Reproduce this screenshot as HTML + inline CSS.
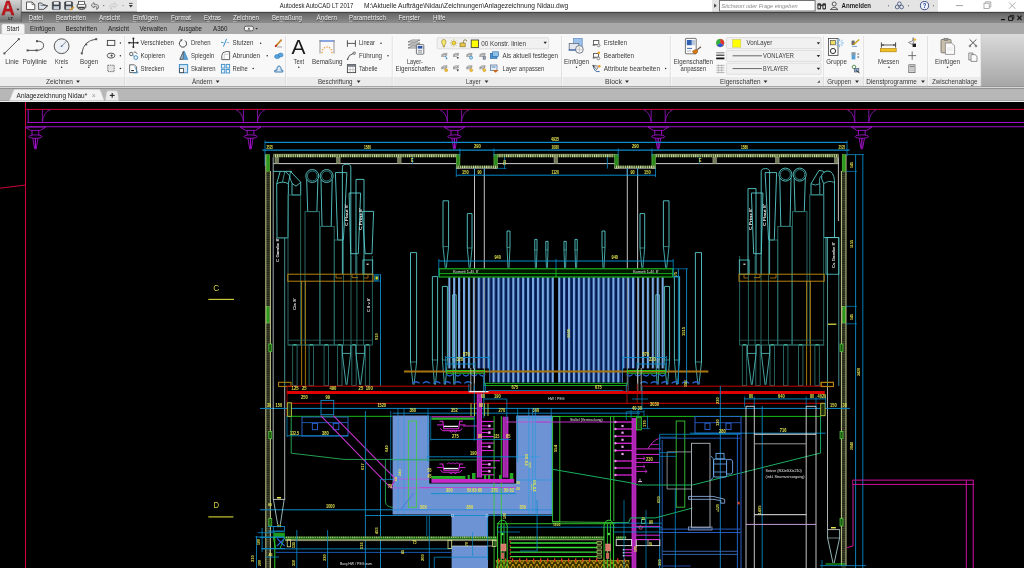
<!DOCTYPE html>
<html><head><meta charset="utf-8"><title>Autodesk AutoCAD LT 2017</title>
<style>
html,body{margin:0;padding:0;background:#000;overflow:hidden}
body{width:1024px;height:568px}
svg{display:block;position:absolute;left:0;top:0;will-change:transform;transform:translateZ(0)}
text{font-family:"Liberation Sans",sans-serif;white-space:pre}
</style></head><body>
<svg width="1024" height="568" viewBox="0 0 1024 568">
<defs>
<linearGradient id="gMenu" x1="0" y1="0" x2="0" y2="1"><stop offset="0" stop-color="#4e4e4e"/><stop offset="0.15" stop-color="#6a6a6a"/><stop offset="1" stop-color="#8e8e8e"/></linearGradient>
<linearGradient id="gApp" x1="0" y1="0" x2="0" y2="1"><stop offset="0" stop-color="#d2d2d2"/><stop offset="0.55" stop-color="#a8a8a8"/><stop offset="1" stop-color="#6c6c6c"/></linearGradient>
<linearGradient id="gEmpty" x1="0" y1="0" x2="0" y2="1"><stop offset="0" stop-color="#dadada"/><stop offset="1" stop-color="#a6a6a6"/></linearGradient>
</defs>
<rect x="0" y="0" width="1024" height="568" fill="#000" stroke="none" stroke-width="1" />
<rect x="0" y="0" width="1024" height="12.5" fill="#ffffff" stroke="none" stroke-width="1" />
<rect x="22" y="0" width="115" height="12" fill="#e6e6e6" stroke="none" stroke-width="1" />
<rect x="712" y="0" width="226" height="12" fill="#e4e4e4" stroke="none" stroke-width="1" />
<rect x="0" y="12" width="1024" height="11.5" fill="url(#gMenu)" stroke="none" stroke-width="1" />
<line x1="0" y1="12.3" x2="1024" y2="12.3" stroke="#3a3a3a" stroke-width="0.8" />
<rect x="0" y="23" width="1024" height="11" fill="#a9a9a9" stroke="none" stroke-width="1" />
<rect x="0" y="34" width="981" height="43" fill="#f8f8f8" stroke="none" stroke-width="1" />
<rect x="0" y="77" width="981" height="9.5" fill="#ebebeb" stroke="none" stroke-width="1" />
<rect x="981" y="34" width="43" height="52.5" fill="url(#gEmpty)" stroke="none" stroke-width="1" />
<rect x="0" y="86.5" width="1024" height="2" fill="#d6d6d6" stroke="none" stroke-width="1" />
<rect x="0" y="88.5" width="1024" height="12" fill="#b7b7b7" stroke="none" stroke-width="1" />
<rect x="0" y="100.5" width="1024" height="1.9" fill="#ececec" stroke="none" stroke-width="1" />
<rect x="0" y="0" width="21" height="21.5" fill="url(#gApp)" stroke="none" stroke-width="1" />
<line x1="21.3" y1="0" x2="21.3" y2="22" stroke="#555" stroke-width="0.8" />
<text x="1.2" y="14.6" font-size="19.5" font-weight="bold" fill="#c2141b" textLength="13.4" lengthAdjust="spacingAndGlyphs" stroke="#8e0f14" stroke-width="0.3">A</text>
<path d="M16.4 8.8 L19.4 8.8 L17.9 10.6 Z" fill="#222" stroke="none" stroke-width="0" />
<text x="8.2" y="19.8" font-size="4.2" fill="#1a1a1a" textLength="4.8" lengthAdjust="spacingAndGlyphs" font-weight="bold">LT</text>
<path d="M26.5 2 L32 2 L34.8 4.6 L34.8 9.6 L26.5 9.6 Z" fill="#fdfdfd" stroke="#4a4a4a" stroke-width="0.9" />
<path d="M32 2 L32 4.6 L34.8 4.6" fill="none" stroke="#4a4a4a" stroke-width="0.7" />
<path d="M38.6 3 L41.5 3 L42.5 4.2 L47.6 5.8 L43.6 9.4 L38.6 9.4 Z" fill="#dfe6ee" stroke="#4a4a4a" stroke-width="0.9" />
<path d="M40.5 5.2 L47.6 5.8 L43.6 9.4" fill="none" stroke="#4a4a4a" stroke-width="0.7" />
<rect x="52.3" y="1.8" width="8" height="7.8" fill="#3d4450" stroke="#30343c" stroke-width="0.6" rx="0.8"/>
<rect x="53.8" y="2" width="5" height="2.6" fill="#e8e8e8" stroke="none" stroke-width="1" />
<rect x="53.6" y="6.2" width="5.4" height="3.2" fill="#cfd3da" stroke="none" stroke-width="1" />
<rect x="64.6" y="1.8" width="8" height="7.8" fill="#3d4450" stroke="#30343c" stroke-width="0.6" rx="0.8"/>
<rect x="66.1" y="2" width="5" height="2.6" fill="#e8e8e8" stroke="none" stroke-width="1" />
<rect x="65.9" y="6.2" width="5.4" height="3.2" fill="#cfd3da" stroke="none" stroke-width="1" />
<path d="M69.5 9.6 L73.5 6.6 L74.3 7.6 L70.6 10.4 Z" fill="#e09a20" stroke="none" stroke-width="0" />
<ellipse cx="81.5" cy="6" rx="4.4" ry="3.4" fill="#f4f4f4" stroke="#3a3a3a" stroke-width="1"/>
<rect x="78.6" y="1.6" width="5.8" height="3" fill="#fff" stroke="#3a3a3a" stroke-width="0.7" />
<rect x="78.2" y="6.8" width="6.6" height="1.6" fill="#3a3a3a" stroke="none" stroke-width="1" />
<path d="M91 5.4 L94 2.6 L94 4.2 Q98.8 4 98.6 7.2 Q98.4 9.2 96.2 9.4 Q97.6 8 96.6 6.8 Q95.8 6.2 94 6.4 L94 8 Z" fill="#d8d8d8" stroke="#555" stroke-width="0.7" />
<circle cx="103.8" cy="5.6" r="0.55" fill="#444" stroke="none" stroke-width="0"/>
<path d="M117.4 5.4 L114.4 2.6 L114.4 4.2 Q109.6 4 109.8 7.2 Q110 9.2 112.2 9.4 Q110.8 8 111.8 6.8 Q112.6 6.2 114.4 6.4 L114.4 8 Z" fill="#e2e2e2" stroke="#c4c4c4" stroke-width="0.7" />
<circle cx="123" cy="5.6" r="0.55" fill="#8a8a8a" stroke="none" stroke-width="0"/>
<line x1="129" y1="3.4" x2="132.6" y2="3.4" stroke="#444" stroke-width="0.9" />
<path d="M128.8 5 L132.8 5 L130.8 7.6 Z" fill="#333" stroke="none" stroke-width="0" />
<line x1="21.5" y1="12.2" x2="137" y2="12.2" stroke="#4a4a4a" stroke-width="0.9" />
<text x="279.7" y="8.2" font-size="6.6" fill="#222" textLength="73.6" lengthAdjust="spacingAndGlyphs" >Autodesk AutoCAD LT 2017</text>
<text x="363.9" y="8.2" font-size="6.6" fill="#222" textLength="204.3" lengthAdjust="spacingAndGlyphs" >M:\Aktuelle Aufträge\Nidau\Zeichnungen\Anlagezeichnung Nidau.dwg</text>
<path d="M714.2 3.6 L714.2 7.8 L716.6 5.7 Z" fill="#333" stroke="none" stroke-width="0" />
<rect x="719.5" y="0.6" width="95.6" height="10.4" fill="#fff" stroke="#555" stroke-width="0.8" />
<text x="721.6" y="7.9" font-size="6" fill="#8a8a8a" textLength="76" lengthAdjust="spacingAndGlyphs" font-style="italic">Stichwort oder Frage eingeben</text>
<rect x="817.4" y="3.2" width="3.6" height="6.2" fill="#333" stroke="none" stroke-width="0" rx="1"/>
<rect x="822.4" y="3.2" width="3.6" height="6.2" fill="#333" stroke="none" stroke-width="0" rx="1"/>
<rect x="820" y="4.6" width="3" height="1.6" fill="#333" stroke="none" stroke-width="1" />
<rect x="818.4" y="5.6" width="1.6" height="2.6" fill="#ddd" stroke="none" stroke-width="1" />
<rect x="823.4" y="5.6" width="1.6" height="2.6" fill="#ddd" stroke="none" stroke-width="1" />
<circle cx="834.2" cy="4" r="2" fill="#eee" stroke="#333" stroke-width="0.8"/>
<path d="M830.4 9.6 Q834.2 5.2 838 9.6 Z" fill="#eee" stroke="#333" stroke-width="0.8" />
<text x="841.6" y="8.3" font-size="6.6" fill="#1c1c1c" textLength="29.4" lengthAdjust="spacingAndGlyphs" font-weight="bold">Anmelden</text>
<circle cx="888.5" cy="5.8" r="0.55" fill="#444" stroke="none" stroke-width="0"/>
<circle cx="899.4" cy="3.8" r="1.9" fill="none" stroke="#3c4f7a" stroke-width="0.8"/>
<circle cx="897.2" cy="7" r="1.9" fill="none" stroke="#3c4f7a" stroke-width="0.8"/>
<circle cx="901.6" cy="7" r="1.9" fill="none" stroke="#3c4f7a" stroke-width="0.8"/>
<circle cx="908.5" cy="5.8" r="0.55" fill="#444" stroke="none" stroke-width="0"/>
<circle cx="924.5" cy="5.6" r="4.1" fill="#eef2fb" stroke="#2b3f78" stroke-width="0.9"/>
<text x="922.7" y="8" font-size="6.6" fill="#1f3f9a" textLength="3.6" lengthAdjust="spacingAndGlyphs" font-weight="bold">?</text>
<circle cx="933.5" cy="5.8" r="0.55" fill="#444" stroke="none" stroke-width="0"/>
<line x1="956" y1="5.6" x2="963" y2="5.6" stroke="#8a8a8a" stroke-width="0.8" />
<rect x="984" y="3.2" width="5.2" height="5.2" fill="none" stroke="#9a9a9a" stroke-width="0.8" />
<path d="M985.6 3.2 L985.6 1.8 L990.8 1.8 L990.8 7 L989.2 7" fill="none" stroke="#9a9a9a" stroke-width="0.8" />
<line x1="1009" y1="2.4" x2="1015.4" y2="8.8" stroke="#9a9a9a" stroke-width="0.8" />
<line x1="1015.4" y1="2.4" x2="1009" y2="8.8" stroke="#9a9a9a" stroke-width="0.8" />
<line x1="1001" y1="19.6" x2="1005" y2="19.6" stroke="#111" stroke-width="1.2" />
<rect x="1008.6" y="16.8" width="3.8" height="3.6" fill="none" stroke="#111" stroke-width="0.9" />
<path d="M1010 16.8 L1010 15.4 L1013.8 15.4 L1013.8 19 L1012.4 19" fill="none" stroke="#111" stroke-width="0.8" />
<line x1="1017.4" y1="15.6" x2="1021.6" y2="20.2" stroke="#111" stroke-width="1.1" />
<line x1="1021.6" y1="15.6" x2="1017.4" y2="20.2" stroke="#111" stroke-width="1.1" />
<text x="29.1" y="20.6" font-size="6.6" fill="#2a2a2a" textLength="14.2" lengthAdjust="spacingAndGlyphs" opacity="0.7">Datei</text>
<text x="28.8" y="20.2" font-size="6.6" fill="#f2f2f2" textLength="14.2" lengthAdjust="spacingAndGlyphs" >Datei</text>
<line x1="28.8" y1="21.3" x2="31.64" y2="21.3" stroke="#e8e8e8" stroke-width="0.5" />
<text x="56.3" y="20.6" font-size="6.6" fill="#2a2a2a" textLength="30" lengthAdjust="spacingAndGlyphs" opacity="0.7">Bearbeiten</text>
<text x="56" y="20.2" font-size="6.6" fill="#f2f2f2" textLength="30" lengthAdjust="spacingAndGlyphs" >Bearbeiten</text>
<line x1="56.0" y1="21.3" x2="59.0" y2="21.3" stroke="#e8e8e8" stroke-width="0.5" />
<text x="99.3" y="20.6" font-size="6.6" fill="#2a2a2a" textLength="21" lengthAdjust="spacingAndGlyphs" opacity="0.7">Ansicht</text>
<text x="99" y="20.2" font-size="6.6" fill="#f2f2f2" textLength="21" lengthAdjust="spacingAndGlyphs" >Ansicht</text>
<line x1="99.0" y1="21.3" x2="102.0" y2="21.3" stroke="#e8e8e8" stroke-width="0.5" />
<text x="133.3" y="20.6" font-size="6.6" fill="#2a2a2a" textLength="25" lengthAdjust="spacingAndGlyphs" opacity="0.7">Einfügen</text>
<text x="133" y="20.2" font-size="6.6" fill="#f2f2f2" textLength="25" lengthAdjust="spacingAndGlyphs" >Einfügen</text>
<line x1="133.0" y1="21.3" x2="136.125" y2="21.3" stroke="#e8e8e8" stroke-width="0.5" />
<text x="171.3" y="20.6" font-size="6.6" fill="#2a2a2a" textLength="20" lengthAdjust="spacingAndGlyphs" opacity="0.7">Format</text>
<text x="171" y="20.2" font-size="6.6" fill="#f2f2f2" textLength="20" lengthAdjust="spacingAndGlyphs" >Format</text>
<line x1="171.0" y1="21.3" x2="174.33333333333334" y2="21.3" stroke="#e8e8e8" stroke-width="0.5" />
<text x="204.3" y="20.6" font-size="6.6" fill="#2a2a2a" textLength="17" lengthAdjust="spacingAndGlyphs" opacity="0.7">Extras</text>
<text x="204" y="20.2" font-size="6.6" fill="#f2f2f2" textLength="17" lengthAdjust="spacingAndGlyphs" >Extras</text>
<line x1="206.83333333333334" y1="21.3" x2="209.66666666666666" y2="21.3" stroke="#e8e8e8" stroke-width="0.5" />
<text x="233.3" y="20.6" font-size="6.6" fill="#2a2a2a" textLength="26" lengthAdjust="spacingAndGlyphs" opacity="0.7">Zeichnen</text>
<text x="233" y="20.2" font-size="6.6" fill="#f2f2f2" textLength="26" lengthAdjust="spacingAndGlyphs" >Zeichnen</text>
<line x1="233.0" y1="21.3" x2="236.25" y2="21.3" stroke="#e8e8e8" stroke-width="0.5" />
<text x="272.3" y="20.6" font-size="6.6" fill="#2a2a2a" textLength="30" lengthAdjust="spacingAndGlyphs" opacity="0.7">Bemaßung</text>
<text x="272" y="20.2" font-size="6.6" fill="#f2f2f2" textLength="30" lengthAdjust="spacingAndGlyphs" >Bemaßung</text>
<line x1="279.5" y1="21.3" x2="283.25" y2="21.3" stroke="#e8e8e8" stroke-width="0.5" />
<text x="316.8" y="20.6" font-size="6.6" fill="#2a2a2a" textLength="20.5" lengthAdjust="spacingAndGlyphs" opacity="0.7">Ändern</text>
<text x="316.5" y="20.2" font-size="6.6" fill="#f2f2f2" textLength="20.5" lengthAdjust="spacingAndGlyphs" >Ändern</text>
<line x1="319.9166666666667" y1="21.3" x2="323.3333333333333" y2="21.3" stroke="#e8e8e8" stroke-width="0.5" />
<text x="349.3" y="20.6" font-size="6.6" fill="#2a2a2a" textLength="37" lengthAdjust="spacingAndGlyphs" opacity="0.7">Parametrisch</text>
<text x="349" y="20.2" font-size="6.6" fill="#f2f2f2" textLength="37" lengthAdjust="spacingAndGlyphs" >Parametrisch</text>
<line x1="349.0" y1="21.3" x2="352.0833333333333" y2="21.3" stroke="#e8e8e8" stroke-width="0.5" />
<text x="398.8" y="20.6" font-size="6.6" fill="#2a2a2a" textLength="21.5" lengthAdjust="spacingAndGlyphs" opacity="0.7">Fenster</text>
<text x="398.5" y="20.2" font-size="6.6" fill="#f2f2f2" textLength="21.5" lengthAdjust="spacingAndGlyphs" >Fenster</text>
<line x1="407.7142857142857" y1="21.3" x2="410.7857142857143" y2="21.3" stroke="#e8e8e8" stroke-width="0.5" />
<text x="433.3" y="20.6" font-size="6.6" fill="#2a2a2a" textLength="12.5" lengthAdjust="spacingAndGlyphs" opacity="0.7">Hilfe</text>
<text x="433" y="20.2" font-size="6.6" fill="#f2f2f2" textLength="12.5" lengthAdjust="spacingAndGlyphs" >Hilfe</text>
<line x1="433.0" y1="21.3" x2="435.5" y2="21.3" stroke="#e8e8e8" stroke-width="0.5" />
<path d="M1.8 34.2 L1.8 25 L2.8 24 L23.4 24 L24.4 25 L24.4 34.2 Z" fill="#f4f4f4" stroke="#d0d0d0" stroke-width="0.5" />
<text x="6.6" y="31.3" font-size="6.6" fill="#222" textLength="12.6" lengthAdjust="spacingAndGlyphs" >Start</text>
<text x="30" y="31.3" font-size="6.6" fill="#222" textLength="25" lengthAdjust="spacingAndGlyphs" >Einfügen</text>
<text x="65.5" y="31.3" font-size="6.6" fill="#222" textLength="31.5" lengthAdjust="spacingAndGlyphs" >Beschriften</text>
<text x="108" y="31.3" font-size="6.6" fill="#222" textLength="21" lengthAdjust="spacingAndGlyphs" >Ansicht</text>
<text x="139.5" y="31.3" font-size="6.6" fill="#222" textLength="27.5" lengthAdjust="spacingAndGlyphs" >Verwalten</text>
<text x="178" y="31.3" font-size="6.6" fill="#222" textLength="24" lengthAdjust="spacingAndGlyphs" >Ausgabe</text>
<text x="213" y="31.3" font-size="6.6" fill="#222" textLength="14.5" lengthAdjust="spacingAndGlyphs" >A360</text>
<rect x="244.4" y="26.2" width="9" height="4.6" fill="#f0f0f0" stroke="#333" stroke-width="0.7" rx="1.6"/>
<path d="M247.6 29.6 L250.2 29.6 L248.9 27.6 Z" fill="#333" stroke="none" stroke-width="0" />
<path d="M255.4 28 L257.8 28 L256.6 29.6 Z" fill="#222" stroke="none" stroke-width="0" />
<path d="M9.6 100.6 L13.6 90.6 L15 89.6 L99 89.6 L100.4 90.6 L104 100.6 Z" fill="#f4f4f4" stroke="#d8d8d8" stroke-width="0.5" />
<text x="16.6" y="97.9" font-size="6.6" fill="#222" textLength="70.6" lengthAdjust="spacingAndGlyphs" >Anlagezeichnung Nidau*</text>
<text x="91.8" y="97.6" font-size="6.4" fill="#999" textLength="4" lengthAdjust="spacingAndGlyphs" >×</text>
<path d="M105.4 100.4 L106.6 92 L108 90.8 L116.4 90.8 L117.6 92 L118.8 100.4 Z" fill="#ececec" stroke="#ccc" stroke-width="0.5" />
<line x1="109.8" y1="95.4" x2="114.6" y2="95.4" stroke="#222" stroke-width="1.1" />
<line x1="112.2" y1="93" x2="112.2" y2="97.8" stroke="#222" stroke-width="1.1" />
<line x1="124.8" y1="36" x2="124.8" y2="86" stroke="#d4d4d4" stroke-width="0.8" />
<line x1="125.6" y1="36" x2="125.6" y2="86" stroke="#ffffff" stroke-width="0.6" />
<line x1="285.6" y1="36" x2="285.6" y2="86" stroke="#d4d4d4" stroke-width="0.8" />
<line x1="286.40000000000003" y1="36" x2="286.40000000000003" y2="86" stroke="#ffffff" stroke-width="0.6" />
<line x1="392.3" y1="36" x2="392.3" y2="86" stroke="#d4d4d4" stroke-width="0.8" />
<line x1="393.1" y1="36" x2="393.1" y2="86" stroke="#ffffff" stroke-width="0.6" />
<line x1="561.6" y1="36" x2="561.6" y2="86" stroke="#d4d4d4" stroke-width="0.8" />
<line x1="562.4" y1="36" x2="562.4" y2="86" stroke="#ffffff" stroke-width="0.6" />
<line x1="670.4" y1="36" x2="670.4" y2="86" stroke="#d4d4d4" stroke-width="0.8" />
<line x1="671.1999999999999" y1="36" x2="671.1999999999999" y2="86" stroke="#ffffff" stroke-width="0.6" />
<line x1="823.8" y1="36" x2="823.8" y2="86" stroke="#d4d4d4" stroke-width="0.8" />
<line x1="824.5999999999999" y1="36" x2="824.5999999999999" y2="86" stroke="#ffffff" stroke-width="0.6" />
<line x1="863.8" y1="36" x2="863.8" y2="86" stroke="#d4d4d4" stroke-width="0.8" />
<line x1="864.5999999999999" y1="36" x2="864.5999999999999" y2="86" stroke="#ffffff" stroke-width="0.6" />
<line x1="927.6" y1="36" x2="927.6" y2="86" stroke="#d4d4d4" stroke-width="0.8" />
<line x1="928.4" y1="36" x2="928.4" y2="86" stroke="#ffffff" stroke-width="0.6" />
<line x1="981" y1="34" x2="981" y2="86.5" stroke="#c8c8c8" stroke-width="0.6" />
<text x="46" y="83.8" font-size="6.6" fill="#3a3a3a" textLength="27" lengthAdjust="spacingAndGlyphs" >Zeichnen</text>
<path d="M76.125 80.475 L79.875 80.475 L78 82.975 Z" fill="#2a2a2a" stroke="none" stroke-width="0" />
<text x="192" y="83.8" font-size="6.6" fill="#3a3a3a" textLength="20.5" lengthAdjust="spacingAndGlyphs" >Ändern</text>
<path d="M215.725 80.475 L219.475 80.475 L217.6 82.975 Z" fill="#2a2a2a" stroke="none" stroke-width="0" />
<text x="317.9" y="83.8" font-size="6.6" fill="#3a3a3a" textLength="34.7" lengthAdjust="spacingAndGlyphs" >Beschriftung</text>
<path d="M356.725 80.475 L360.475 80.475 L358.6 82.975 Z" fill="#2a2a2a" stroke="none" stroke-width="0" />
<text x="466" y="83.8" font-size="6.6" fill="#3a3a3a" textLength="14.6" lengthAdjust="spacingAndGlyphs" >Layer</text>
<path d="M484.625 80.475 L488.375 80.475 L486.5 82.975 Z" fill="#2a2a2a" stroke="none" stroke-width="0" />
<text x="605" y="83.8" font-size="6.6" fill="#3a3a3a" textLength="17" lengthAdjust="spacingAndGlyphs" >Block</text>
<path d="M625.125 80.475 L628.875 80.475 L627 82.975 Z" fill="#2a2a2a" stroke="none" stroke-width="0" />
<text x="720" y="83.8" font-size="6.6" fill="#3a3a3a" textLength="40.5" lengthAdjust="spacingAndGlyphs" >Eigenschaften</text>
<path d="M763.625 80.475 L767.375 80.475 L765.5 82.975 Z" fill="#2a2a2a" stroke="none" stroke-width="0" />
<text x="827.3" y="83.8" font-size="6.6" fill="#3a3a3a" textLength="24.0" lengthAdjust="spacingAndGlyphs" >Gruppen</text>
<path d="M855.125 80.475 L858.875 80.475 L857 82.975 Z" fill="#2a2a2a" stroke="none" stroke-width="0" />
<text x="866.3" y="83.8" font-size="6.6" fill="#3a3a3a" textLength="50.6" lengthAdjust="spacingAndGlyphs" >Dienstprogramme</text>
<path d="M921.125 80.475 L924.875 80.475 L923 82.975 Z" fill="#2a2a2a" stroke="none" stroke-width="0" />
<text x="931.9" y="83.8" font-size="6.6" fill="#3a3a3a" textLength="45.6" lengthAdjust="spacingAndGlyphs" >Zwischenablage</text>
<path d="M817.2 82.8 L819.8 82.8 L819.8 80.2 Z" fill="#444" stroke="none" stroke-width="0" />
<line x1="4.4" y1="53.4" x2="18.8" y2="39.2" stroke="#555" stroke-width="1" />
<rect x="3.4" y="52.4" width="2" height="2" fill="#555" stroke="none" stroke-width="1" />
<rect x="17.8" y="38.2" width="2" height="2" fill="#555" stroke="none" stroke-width="1" />
<text x="5.2" y="63.6" font-size="6.6" fill="#3a3a3a" textLength="13.6" lengthAdjust="spacingAndGlyphs" >Linie</text>
<path d="M27.6 50.4 L36.6 50.4 Q43.6 50.2 43.6 45.4 Q43.4 41 37 41.2" fill="none" stroke="#555" stroke-width="1" />
<rect x="26.6" y="49.4" width="2" height="2" fill="#555" stroke="none" stroke-width="1" />
<rect x="35.6" y="49.4" width="2" height="2" fill="#555" stroke="none" stroke-width="1" />
<rect x="36" y="40.2" width="2" height="2" fill="#555" stroke="none" stroke-width="1" />
<text x="22.4" y="63.6" font-size="6.6" fill="#3a3a3a" textLength="24.6" lengthAdjust="spacingAndGlyphs" >Polylinie</text>
<circle cx="61.6" cy="46.2" r="7.4" fill="#eef1f6" stroke="#555" stroke-width="1"/>
<line x1="61.6" y1="46.2" x2="66.4" y2="41.4" stroke="#6a7d99" stroke-width="0.9" />
<circle cx="61.6" cy="46.2" r="0.9" fill="#5b7aa6" stroke="none" stroke-width="0"/>
<text x="55" y="63.6" font-size="6.6" fill="#3a3a3a" textLength="13" lengthAdjust="spacingAndGlyphs" >Kreis</text>
<circle cx="61.6" cy="67.3" r="0.75" fill="#2a2a2a" stroke="none" stroke-width="0"/>
<path d="M81.8 53.4 Q83.6 40.4 96.2 39.2" fill="none" stroke="#555" stroke-width="1" />
<rect x="80.8" y="52.4" width="2" height="2" fill="#555" stroke="none" stroke-width="1" />
<rect x="95.2" y="38.2" width="2" height="2" fill="#555" stroke="none" stroke-width="1" />
<rect x="85.4" y="43.6" width="1.8" height="1.8" fill="#555" stroke="none" stroke-width="1" />
<text x="80" y="63.6" font-size="6.6" fill="#3a3a3a" textLength="18.2" lengthAdjust="spacingAndGlyphs" >Bogen</text>
<circle cx="88.8" cy="67.3" r="0.75" fill="#2a2a2a" stroke="none" stroke-width="0"/>
<rect x="107.4" y="40.4" width="7.4" height="5" fill="none" stroke="#444" stroke-width="0.9" />
<rect x="106.8" y="44.6" width="1.4" height="1.4" fill="#444" stroke="none" stroke-width="1" />
<circle cx="120.4" cy="43" r="0.75" fill="#2a2a2a" stroke="none" stroke-width="0"/>
<ellipse cx="111" cy="55.6" rx="3.8" ry="2.5" fill="none" stroke="#444" stroke-width="0.9"/>
<circle cx="111.6" cy="55.6" r="1.1" fill="#444" stroke="none" stroke-width="0"/>
<circle cx="120.4" cy="55.8" r="0.75" fill="#2a2a2a" stroke="none" stroke-width="0"/>
<rect x="107.8" y="65.2" width="6.4" height="6.4" fill="#e4e4e4" stroke="#555" stroke-width="0.8" stroke-dasharray="1.4 0.8"/>
<circle cx="120.4" cy="68.6" r="0.75" fill="#2a2a2a" stroke="none" stroke-width="0"/>
<line x1="129.4" y1="42.8" x2="137.4" y2="42.8" stroke="#222" stroke-width="1" />
<line x1="133.4" y1="38.8" x2="133.4" y2="46.8" stroke="#222" stroke-width="1" />
<circle cx="129.2" cy="42.8" r="1" fill="#222" stroke="none" stroke-width="0"/>
<circle cx="137.6" cy="42.8" r="1" fill="#222" stroke="none" stroke-width="0"/>
<circle cx="133.4" cy="38.6" r="1" fill="#222" stroke="none" stroke-width="0"/>
<circle cx="133.4" cy="47" r="1" fill="#222" stroke="none" stroke-width="0"/>
<text x="140.4" y="45.3" font-size="6.6" fill="#3a3a3a" textLength="33.6" lengthAdjust="spacingAndGlyphs" >Verschieben</text>
<circle cx="131.2" cy="54" r="1.7" fill="none" stroke="#444" stroke-width="0.8"/>
<circle cx="135.8" cy="57.6" r="1.9" fill="none" stroke="#3d8fc9" stroke-width="1"/>
<line x1="132.6" y1="55.2" x2="134.6" y2="56.6" stroke="#3d8fc9" stroke-width="0.8" />
<path d="M133.6 52 Q136.6 51.6 137.2 54" fill="none" stroke="#444" stroke-width="0.7" />
<text x="140.5" y="58.1" font-size="6.6" fill="#3a3a3a" textLength="24.5" lengthAdjust="spacingAndGlyphs" >Kopieren</text>
<path d="M129.6 64.8 L134.4 64.8 L136.6 67 L136.6 72.6 L129.6 72.6 Z" fill="#fff" stroke="#444" stroke-width="0.8" />
<path d="M134.6 66.6 L137.8 72.8 L133 72.8" fill="none" stroke="#3d8fc9" stroke-width="0.8" />
<line x1="131.2" y1="70.6" x2="134" y2="70.6" stroke="#222" stroke-width="1" />
<text x="140.5" y="71" font-size="6.6" fill="#3a3a3a" textLength="23.8" lengthAdjust="spacingAndGlyphs" >Strecken</text>
<path d="M185 40.6 A3.6 3.6 0 1 1 181.2 40.4" fill="none" stroke="#444" stroke-width="1" />
<path d="M180.4 39.2 L182.6 39.6 L181.4 41.6 Z" fill="#444" stroke="none" stroke-width="0" />
<text x="190.9" y="45.3" font-size="6.6" fill="#3a3a3a" textLength="19.7" lengthAdjust="spacingAndGlyphs" >Drehen</text>
<path d="M183.4 51.2 L179.8 59.4 L183.4 59.4 Z" fill="#8fb6d8" stroke="#444" stroke-width="0.8" />
<path d="M184.2 51.2 L187.8 59.4 L184.2 59.4 Z" fill="#5f9fd0" stroke="#3d8fc9" stroke-width="0.8" />
<text x="190.9" y="58.1" font-size="6.6" fill="#3a3a3a" textLength="23.4" lengthAdjust="spacingAndGlyphs" >Spiegeln</text>
<rect x="179.4" y="64.6" width="8.2" height="8.2" fill="#d6e7f5" stroke="#3d8fc9" stroke-width="1" />
<rect x="179.6" y="68.6" width="4" height="4" fill="#fff" stroke="#444" stroke-width="0.8" />
<text x="190.9" y="71" font-size="6.6" fill="#3a3a3a" textLength="24.7" lengthAdjust="spacingAndGlyphs" >Skalieren</text>
<line x1="223.4" y1="46.6" x2="226.6" y2="38.8" stroke="#3d8fc9" stroke-width="1" />
<line x1="221" y1="42.2" x2="223.6" y2="42.8" stroke="#3d8fc9" stroke-width="0.9" />
<line x1="226.6" y1="42.6" x2="229.6" y2="42.6" stroke="#3d8fc9" stroke-width="0.8" stroke-dasharray="1 0.6"/>
<text x="232.5" y="45.3" font-size="6.6" fill="#3a3a3a" textLength="21" lengthAdjust="spacingAndGlyphs" >Stutzen</text>
<circle cx="260.6" cy="43.2" r="0.75" fill="#2a2a2a" stroke="none" stroke-width="0"/>
<path d="M221.8 59.6 L221.8 55.6 Q222 51.8 226 51.6 L229.6 51.6 L229.6 59.6 Z" fill="#fff" stroke="#555" stroke-width="0.9" />
<path d="M224.2 59.4 L224.2 54.2 L229.4 54.2" fill="none" stroke="#aaa" stroke-width="0.6" />
<text x="232.5" y="58.1" font-size="6.6" fill="#3a3a3a" textLength="27.6" lengthAdjust="spacingAndGlyphs" >Abrunden</text>
<circle cx="267.2" cy="55.8" r="0.75" fill="#2a2a2a" stroke="none" stroke-width="0"/>
<rect x="221.4" y="64.4" width="3.4" height="3.6" fill="#eaf3fb" stroke="#3d8fc9" stroke-width="0.9" />
<rect x="226.2" y="64.4" width="3.4" height="3.6" fill="#eaf3fb" stroke="#3d8fc9" stroke-width="0.9" />
<rect x="221.4" y="69.4" width="3.4" height="3.6" fill="#eaf3fb" stroke="#3d8fc9" stroke-width="0.9" />
<rect x="226.2" y="69.4" width="3.4" height="3.6" fill="#eaf3fb" stroke="#3d8fc9" stroke-width="0.9" />
<text x="232.5" y="71" font-size="6.6" fill="#3a3a3a" textLength="15.4" lengthAdjust="spacingAndGlyphs" >Reihe</text>
<circle cx="253.2" cy="68.6" r="0.75" fill="#2a2a2a" stroke="none" stroke-width="0"/>
<line x1="275.6" y1="46.4" x2="281.6" y2="39.6" stroke="#c78a2a" stroke-width="1.6" />
<line x1="275.2" y1="46.8" x2="276.8" y2="45" stroke="#b02318" stroke-width="1.6" />
<line x1="277.2" y1="47" x2="282" y2="47" stroke="#666" stroke-width="0.6" />
<ellipse cx="277.2" cy="56.6" rx="2.6" ry="2" fill="#5aa3dc" stroke="#2f7fc0" stroke-width="0.7"/>
<ellipse cx="280.6" cy="55" rx="2.4" ry="1.9" fill="#5aa3dc" stroke="#2f7fc0" stroke-width="0.7"/>
<path d="M274.8 72 L274.8 70.2 L277 70.2 Q276.6 66 279 66 Q281.2 66 281.2 70.2 L282.8 70.2 L282.8 72 Z" fill="#d5e6f4" stroke="#2f6fa8" stroke-width="0.9" />
<text x="291.6" y="54" font-size="19.8" fill="#1a1a1a" textLength="14" lengthAdjust="spacingAndGlyphs">A</text>
<text x="293.6" y="63.6" font-size="6.6" fill="#3a3a3a" textLength="10.4" lengthAdjust="spacingAndGlyphs" >Text</text>
<circle cx="298.8" cy="67.3" r="0.75" fill="#2a2a2a" stroke="none" stroke-width="0"/>
<line x1="319.6" y1="41" x2="334.4" y2="41" stroke="#2c62c8" stroke-width="1.1" />
<line x1="320" y1="40" x2="320" y2="53.6" stroke="#888" stroke-width="0.9" />
<line x1="334" y1="40" x2="334" y2="53.6" stroke="#888" stroke-width="0.9" />
<circle cx="322.0" cy="52.6" r="0.75" fill="#e8952a" stroke="none" stroke-width="0"/>
<circle cx="322.7" cy="49.8" r="0.75" fill="#e8952a" stroke="none" stroke-width="0"/>
<circle cx="324.5" cy="47.8" r="0.75" fill="#e8952a" stroke="none" stroke-width="0"/>
<circle cx="327.0" cy="47.0" r="0.75" fill="#e8952a" stroke="none" stroke-width="0"/>
<circle cx="329.5" cy="47.8" r="0.75" fill="#e8952a" stroke="none" stroke-width="0"/>
<circle cx="331.3" cy="49.8" r="0.75" fill="#e8952a" stroke="none" stroke-width="0"/>
<circle cx="332.0" cy="52.6" r="0.75" fill="#e8952a" stroke="none" stroke-width="0"/>
<text x="312" y="63.6" font-size="6.6" fill="#3a3a3a" textLength="30.6" lengthAdjust="spacingAndGlyphs" >Bemaßung</text>
<line x1="347.4" y1="43.4" x2="355.4" y2="43.4" stroke="#444" stroke-width="0.9" />
<line x1="347.4" y1="40.2" x2="347.4" y2="46.8" stroke="#444" stroke-width="0.9" />
<line x1="355.4" y1="40.2" x2="355.4" y2="46.8" stroke="#444" stroke-width="0.9" />
<text x="358.9" y="45.3" font-size="6.6" fill="#3a3a3a" textLength="16.1" lengthAdjust="spacingAndGlyphs" >Linear</text>
<circle cx="381" cy="43.2" r="0.75" fill="#2a2a2a" stroke="none" stroke-width="0"/>
<path d="M347.6 59 Q348.6 54.6 353 53.6" fill="none" stroke="#444" stroke-width="0.9" />
<circle cx="354.2" cy="53.2" r="1.2" fill="none" stroke="#444" stroke-width="0.8"/>
<circle cx="347.6" cy="59.2" r="0.8" fill="#444" stroke="none" stroke-width="0"/>
<text x="358.9" y="58.1" font-size="6.6" fill="#3a3a3a" textLength="23.2" lengthAdjust="spacingAndGlyphs" >Führung</text>
<circle cx="388" cy="55.8" r="0.75" fill="#2a2a2a" stroke="none" stroke-width="0"/>
<rect x="347.4" y="64.6" width="8.2" height="8" fill="#fff" stroke="#444" stroke-width="0.9" />
<rect x="347.4" y="64.6" width="8.2" height="2.2" fill="#7a8088" stroke="none" stroke-width="1" />
<line x1="347.4" y1="69.6" x2="355.6" y2="69.6" stroke="#999" stroke-width="0.5" />
<line x1="350.2" y1="66.8" x2="350.2" y2="72.6" stroke="#999" stroke-width="0.5" />
<line x1="353" y1="66.8" x2="353" y2="72.6" stroke="#999" stroke-width="0.5" />
<text x="358.9" y="71" font-size="6.6" fill="#3a3a3a" textLength="18.7" lengthAdjust="spacingAndGlyphs" >Tabelle</text>
<path d="M408 42 L412 40 L420 40 L416 42 Z" fill="#e6e6e6" stroke="#666" stroke-width="0.7" />
<path d="M408 45 L412 43 L420 43 L416 45 Z" fill="#e6e6e6" stroke="#666" stroke-width="0.7" />
<path d="M408 48 L412 46 L420 46 L416 48 Z" fill="#e6e6e6" stroke="#666" stroke-width="0.7" />
<rect x="416.4" y="44.6" width="7.4" height="9.6" fill="#eef2f8" stroke="#555" stroke-width="0.8" rx="0.8"/>
<rect x="417.8" y="46" width="4.6" height="2.6" fill="#2e56a8" stroke="none" stroke-width="1" />
<line x1="418" y1="50.6" x2="422" y2="50.6" stroke="#666" stroke-width="0.6" />
<line x1="418" y1="52.2" x2="422" y2="52.2" stroke="#666" stroke-width="0.6" />
<text x="406.9" y="63.8" font-size="6.6" fill="#3a3a3a" textLength="16.1" lengthAdjust="spacingAndGlyphs" >Layer-</text>
<text x="395.6" y="71.3" font-size="6.6" fill="#3a3a3a" textLength="39.4" lengthAdjust="spacingAndGlyphs" >Eigenschaften</text>
<rect x="437.2" y="37.8" width="111.4" height="11" fill="#f1f1f1" stroke="#d2d2d2" stroke-width="0.7" rx="1"/>
<path d="M441.6 42 Q441.6 39.4 443.8 39.4 Q446 39.4 446 42 Q445.8 43.6 444.6 45 L444.6 46.8 L443 46.8 L443 45 Q441.8 43.6 441.6 42 Z" fill="#f8e86a" stroke="#8a7a20" stroke-width="0.6" />
<circle cx="453.8" cy="43" r="1.9" fill="#f6d838" stroke="#a08a18" stroke-width="0.6"/>
<line x1="456.4" y1="43.0" x2="457.6" y2="43.0" stroke="#b89a18" stroke-width="0.6" />
<line x1="455.6" y1="44.8" x2="456.5" y2="45.7" stroke="#b89a18" stroke-width="0.6" />
<line x1="453.8" y1="45.6" x2="453.8" y2="46.8" stroke="#b89a18" stroke-width="0.6" />
<line x1="452.0" y1="44.8" x2="451.1" y2="45.7" stroke="#b89a18" stroke-width="0.6" />
<line x1="451.2" y1="43.0" x2="450.0" y2="43.0" stroke="#b89a18" stroke-width="0.6" />
<line x1="452.0" y1="41.2" x2="451.1" y2="40.3" stroke="#b89a18" stroke-width="0.6" />
<line x1="453.8" y1="40.4" x2="453.8" y2="39.2" stroke="#b89a18" stroke-width="0.6" />
<line x1="455.6" y1="41.2" x2="456.5" y2="40.3" stroke="#b89a18" stroke-width="0.6" />
<rect x="460" y="43" width="5.2" height="3.8" fill="#e8c848" stroke="#7a6a20" stroke-width="0.6" />
<path d="M463.4 43 L463.4 41.4 Q463.6 39.8 465.2 39.8 Q466.8 39.8 466.8 41.4" fill="none" stroke="#7a6a20" stroke-width="0.8" />
<rect x="471.2" y="40" width="7.4" height="7.4" fill="#ffff00" stroke="#333" stroke-width="0.8" />
<text x="481.3" y="45.7" font-size="6.6" fill="#3a3a3a" textLength="44.7" lengthAdjust="spacingAndGlyphs" >00 Konstr. linien</text>
<path d="M543.5500000000001 41.809999999999995 L546.85 41.809999999999995 L545.2 44.01 Z" fill="#222" stroke="none" stroke-width="0" />
<path d="M441.4 55.0 L443.79999999999995 53.4 L447.2 53.4 L445.0 55.0 Z" fill="#ececec" stroke="#777" stroke-width="0.6" />
<path d="M441.4 56.4 L443.79999999999995 54.800000000000004 L447.2 54.800000000000004 L445.0 56.4 Z" fill="#ececec" stroke="#777" stroke-width="0.6" />
<path d="M444.79999999999995 56.2 q1.8 -0.4 1.8 2.6" fill="none" stroke="#3d8fc9" stroke-width="0.9" />
<path d="M445.4 58.2 L447.79999999999995 58.2 L446.59999999999997 59.6 Z" fill="#3d8fc9" stroke="none" stroke-width="0" />
<path d="M453 55.0 L455.4 53.4 L458.8 53.4 L456.6 55.0 Z" fill="#ececec" stroke="#777" stroke-width="0.6" />
<path d="M453 56.4 L455.4 54.800000000000004 L458.8 54.800000000000004 L456.6 56.4 Z" fill="#ececec" stroke="#777" stroke-width="0.6" />
<path d="M456.6 57.2 L459 57.2 L457.8 59.0 Z" fill="#222" stroke="none" stroke-width="0" />
<path d="M466.4 55.0 L468.79999999999995 53.4 L472.2 53.4 L470.0 55.0 Z" fill="#ececec" stroke="#777" stroke-width="0.6" />
<path d="M466.4 56.4 L468.79999999999995 54.800000000000004 L472.2 54.800000000000004 L470.0 56.4 Z" fill="#ececec" stroke="#777" stroke-width="0.6" />
<circle cx="471.0" cy="57.6" r="1.5" fill="#cfe3f4" stroke="#3d8fc9" stroke-width="0.9"/>
<path d="M479.5 55.0 L481.9 53.4 L485.3 53.4 L483.1 55.0 Z" fill="#ececec" stroke="#777" stroke-width="0.6" />
<path d="M479.5 56.4 L481.9 54.800000000000004 L485.3 54.800000000000004 L483.1 56.4 Z" fill="#ececec" stroke="#777" stroke-width="0.6" />
<rect x="483.1" y="56.6" width="2.4" height="2.6" fill="#9aa5b5" stroke="#4a5568" stroke-width="0.5" />
<path d="M441.4 67.4 L443.79999999999995 65.8 L447.2 65.8 L445.0 67.4 Z" fill="#ececec" stroke="#777" stroke-width="0.6" />
<path d="M441.4 68.8 L443.79999999999995 67.2 L447.2 67.2 L445.0 68.8 Z" fill="#ececec" stroke="#777" stroke-width="0.6" />
<circle cx="446.2" cy="70.2" r="1.4" fill="#f8c838" stroke="#c88a10" stroke-width="0.6"/>
<path d="M453 67.4 L455.4 65.8 L458.8 65.8 L456.6 67.4 Z" fill="#ececec" stroke="#777" stroke-width="0.6" />
<path d="M453 68.8 L455.4 67.2 L458.8 67.2 L456.6 68.8 Z" fill="#ececec" stroke="#777" stroke-width="0.6" />
<path d="M456.6 69.6 L459 69.6 L457.8 71.4 Z" fill="#222" stroke="none" stroke-width="0" />
<path d="M466.4 67.4 L468.79999999999995 65.8 L472.2 65.8 L470.0 67.4 Z" fill="#ececec" stroke="#777" stroke-width="0.6" />
<path d="M466.4 68.8 L468.79999999999995 67.2 L472.2 67.2 L470.0 68.8 Z" fill="#ececec" stroke="#777" stroke-width="0.6" />
<circle cx="471.2" cy="70.2" r="1.4" fill="#f8c838" stroke="#c88a10" stroke-width="0.6"/>
<path d="M479.5 67.4 L481.9 65.8 L485.3 65.8 L483.1 67.4 Z" fill="#ececec" stroke="#777" stroke-width="0.6" />
<path d="M479.5 68.8 L481.9 67.2 L485.3 67.2 L483.1 68.8 Z" fill="#ececec" stroke="#777" stroke-width="0.6" />
<circle cx="484.3" cy="70.2" r="1.4" fill="#f8c838" stroke="#c88a10" stroke-width="0.6"/>
<rect x="490.4" y="53.4" width="6.6" height="5" fill="#4f94cf" stroke="#2a6aa8" stroke-width="0.7" />
<rect x="492.6" y="51.8" width="6" height="4.6" fill="#8fc0e8" stroke="#2a6aa8" stroke-width="0.6" />
<text x="502.5" y="58.1" font-size="6.6" fill="#3a3a3a" textLength="55.5" lengthAdjust="spacingAndGlyphs" >Als aktuell festlegen</text>
<rect x="490.6" y="65" width="6.4" height="5.4" fill="#e8eef6" stroke="#4a6a98" stroke-width="0.7" />
<path d="M492.6 70 L498.6 70 L495.6 72.8 Z" fill="#c8641a" stroke="none" stroke-width="0" />
<line x1="491.6" y1="67" x2="495.6" y2="67" stroke="#2a6aa8" stroke-width="0.8" />
<text x="502.5" y="71" font-size="6.6" fill="#3a3a3a" textLength="41.9" lengthAdjust="spacingAndGlyphs" >Layer anpassen</text>
<rect x="573.6" y="38.6" width="8.6" height="10.4" fill="#9cc2ec" stroke="#5a88c0" stroke-width="0.7" />
<rect x="569.2" y="43.4" width="9.6" height="6.6" fill="#e4e8ee" stroke="#5a6a80" stroke-width="0.8" />
<circle cx="579.4" cy="49.4" r="3.9" fill="#f2f2f2" stroke="#6a7480" stroke-width="0.9"/>
<line x1="568.6" y1="50" x2="576" y2="50" stroke="#2a5aa8" stroke-width="1" />
<line x1="579.4" y1="46.4" x2="579.4" y2="52.6" stroke="#aaa" stroke-width="0.5" />
<line x1="576.4" y1="49.4" x2="582.6" y2="49.4" stroke="#aaa" stroke-width="0.5" />
<text x="564" y="63.6" font-size="6.6" fill="#3a3a3a" textLength="25" lengthAdjust="spacingAndGlyphs" >Einfügen</text>
<circle cx="576.5" cy="67.3" r="0.75" fill="#2a2a2a" stroke="none" stroke-width="0"/>
<rect x="593.4" y="40.6" width="5.4" height="3.8" fill="#fff" stroke="#444" stroke-width="0.8" />
<circle cx="598.6" cy="45.4" r="1.4" fill="#eee" stroke="#666" stroke-width="0.7"/>
<line x1="592.6" y1="45.2" x2="595.4" y2="45.2" stroke="#444" stroke-width="0.8" />
<text x="603.8" y="45.3" font-size="6.6" fill="#3a3a3a" textLength="23.2" lengthAdjust="spacingAndGlyphs" >Erstellen</text>
<rect x="593.4" y="53.6" width="5.2" height="3.6" fill="#fff" stroke="#444" stroke-width="0.8" />
<circle cx="598.4" cy="58.4" r="1.4" fill="#eee" stroke="#666" stroke-width="0.7"/>
<circle cx="598.8" cy="52.8" r="1.3" fill="#f0a020" stroke="none" stroke-width="0"/>
<line x1="592.6" y1="58" x2="595.4" y2="58" stroke="#444" stroke-width="0.8" />
<text x="603.8" y="58.1" font-size="6.6" fill="#3a3a3a" textLength="30.2" lengthAdjust="spacingAndGlyphs" >Bearbeiten</text>
<path d="M593.4 66 Q594 72.4 599.6 71.6" fill="none" stroke="#3a6aa8" stroke-width="1" />
<path d="M593 65.2 L596.6 69.6 L598.8 66.4 Z" fill="#e8e8e8" stroke="#555" stroke-width="0.7" />
<circle cx="599.4" cy="66.2" r="1.2" fill="#f0a020" stroke="none" stroke-width="0"/>
<line x1="592.4" y1="65.6" x2="594.4" y2="66.8" stroke="#333" stroke-width="1" />
<text x="603.8" y="71" font-size="6.6" fill="#3a3a3a" textLength="56.2" lengthAdjust="spacingAndGlyphs" >Attribute bearbeiten</text>
<circle cx="665.6" cy="68.6" r="0.75" fill="#2a2a2a" stroke="none" stroke-width="0"/>
<rect x="685.4" y="38.4" width="10.8" height="15.4" fill="#fcfcfc" stroke="#555" stroke-width="0.8" rx="0.6"/>
<rect x="686.8" y="40" width="5" height="5.2" fill="#2f5fb0" stroke="none" stroke-width="1" />
<rect x="691.8" y="40" width="3.4" height="5.2" fill="#b9c8dc" stroke="none" stroke-width="1" />
<line x1="687" y1="48.4" x2="692" y2="48.4" stroke="#2a5aa8" stroke-width="0.9" />
<line x1="687" y1="51" x2="691" y2="51" stroke="#888" stroke-width="0.6" />
<path d="M692.4 51.4 Q694.2 49 697.4 50 Q698.4 52.6 696 53.8 Q693.4 54.2 692.4 51.4 Z" fill="#d87a14" stroke="#8a4a08" stroke-width="0.5" />
<line x1="697.2" y1="49.8" x2="701" y2="46.8" stroke="#6a5a4a" stroke-width="1.1" />
<text x="673.8" y="63.6" font-size="6.6" fill="#3a3a3a" textLength="39.2" lengthAdjust="spacingAndGlyphs" >Eigenschaften</text>
<text x="680.6" y="71.3" font-size="6.6" fill="#3a3a3a" textLength="25.6" lengthAdjust="spacingAndGlyphs" >anpassen</text>
<circle cx="720.2" cy="43" r="3.9" fill="#e8e030" stroke="#666" stroke-width="0.5"/>
<path d="M720.2 43 L720.2 39.1 A3.9 3.9 0 0 1 723.6 45 Z" fill="#e03030" stroke="none" stroke-width="0" />
<path d="M720.2 43 L723.6 45 A3.9 3.9 0 0 1 716.8 45 Z" fill="#3050d8" stroke="none" stroke-width="0" />
<path d="M720.2 43 L716.8 45 A3.9 3.9 0 0 1 720.2 39.1 Z" fill="#30b040" stroke="none" stroke-width="0" />
<line x1="716.2" y1="52.8" x2="724.4" y2="52.8" stroke="#222" stroke-width="0.6" />
<line x1="716.2" y1="55.2" x2="724.4" y2="55.2" stroke="#222" stroke-width="1.1" />
<line x1="716.2" y1="58.4" x2="724.4" y2="58.4" stroke="#111" stroke-width="1.8" />
<line x1="716.4" y1="65.4" x2="724.4" y2="65.4" stroke="#999" stroke-width="0.7" />
<line x1="716.4" y1="67.8" x2="724.4" y2="67.8" stroke="#999" stroke-width="0.7" />
<line x1="716.4" y1="70.2" x2="724.4" y2="70.2" stroke="#999" stroke-width="0.7" />
<line x1="716.4" y1="72.6" x2="724.4" y2="72.6" stroke="#999" stroke-width="0.7" />
<line x1="718.4" y1="64.6" x2="718.4" y2="73" stroke="#aaa" stroke-width="0.6" />
<line x1="721.6" y1="64.6" x2="721.6" y2="73" stroke="#aaa" stroke-width="0.6" />
<rect x="726.4" y="37.6" width="94.6" height="11" fill="#f1f1f1" stroke="#d4d4d4" stroke-width="0.7" rx="1"/>
<path d="M816.75 42.21 L820.05 42.21 L818.4 44.410000000000004 Z" fill="#222" stroke="none" stroke-width="0" />
<rect x="726.4" y="50.4" width="94.6" height="11" fill="#f1f1f1" stroke="#d4d4d4" stroke-width="0.7" rx="1"/>
<path d="M816.75 55.01 L820.05 55.01 L818.4 57.21 Z" fill="#222" stroke="none" stroke-width="0" />
<rect x="726.4" y="63.2" width="94.6" height="11" fill="#f1f1f1" stroke="#d4d4d4" stroke-width="0.7" rx="1"/>
<path d="M816.75 67.81 L820.05 67.81 L818.4 70.00999999999999 Z" fill="#222" stroke="none" stroke-width="0" />
<rect x="732.6" y="39.6" width="8.2" height="7.6" fill="#ffff00" stroke="#c8c860" stroke-width="0.6" />
<text x="746.5" y="45.3" font-size="6.6" fill="#3a3a3a" textLength="25.7" lengthAdjust="spacingAndGlyphs" >VonLayer</text>
<line x1="732.6" y1="55.8" x2="762" y2="55.8" stroke="#444" stroke-width="0.8" />
<text x="763" y="58.1" font-size="6.6" fill="#3a3a3a" textLength="31" lengthAdjust="spacingAndGlyphs" >VONLAYER</text>
<line x1="732.6" y1="68.6" x2="762" y2="68.6" stroke="#444" stroke-width="0.8" />
<text x="763" y="71" font-size="6.6" fill="#3a3a3a" textLength="25" lengthAdjust="spacingAndGlyphs" >BYLAYER</text>
<rect x="828.6" y="38.4" width="9.4" height="17" fill="#f8f8f8" stroke="#444" stroke-width="0.8" />
<rect x="830.4" y="40.4" width="5" height="4.4" fill="#f4e060" stroke="#555" stroke-width="0.7" />
<circle cx="833" cy="51" r="2.6" fill="none" stroke="#333" stroke-width="1"/>
<line x1="841.2" y1="43.0" x2="843.8" y2="43.0" stroke="#58a8e8" stroke-width="0.8" />
<line x1="840.7" y1="44.1" x2="842.6" y2="46.0" stroke="#58a8e8" stroke-width="0.8" />
<line x1="839.6" y1="44.6" x2="839.6" y2="47.2" stroke="#58a8e8" stroke-width="0.8" />
<line x1="838.5" y1="44.1" x2="836.6" y2="46.0" stroke="#58a8e8" stroke-width="0.8" />
<line x1="838.0" y1="43.0" x2="835.4" y2="43.0" stroke="#58a8e8" stroke-width="0.8" />
<line x1="838.5" y1="41.9" x2="836.6" y2="40.0" stroke="#58a8e8" stroke-width="0.8" />
<line x1="839.6" y1="41.4" x2="839.6" y2="38.8" stroke="#58a8e8" stroke-width="0.8" />
<line x1="840.7" y1="41.9" x2="842.6" y2="40.0" stroke="#58a8e8" stroke-width="0.8" />
<text x="826.3" y="63.6" font-size="6.6" fill="#3a3a3a" textLength="20.6" lengthAdjust="spacingAndGlyphs" >Gruppe</text>
<rect x="851.6" y="40.6" width="3" height="4.4" fill="#666" stroke="none" stroke-width="1" />
<line x1="853.4" y1="44.8" x2="859.2" y2="39.4" stroke="#c8a020" stroke-width="1.4" />
<line x1="852" y1="46.4" x2="857" y2="46.4" stroke="#5a8ac0" stroke-width="0.8" />
<rect x="851.6" y="52.4" width="3.8" height="7" fill="#58a0d8" stroke="none" stroke-width="1" />
<rect x="851.6" y="52.4" width="3.8" height="2.4" fill="#999" stroke="none" stroke-width="1" />
<path d="M857 54.6 L859.4 54.6 L858.2 53 Z" fill="#666" stroke="none" stroke-width="0" />
<path d="M857 56.6 L859.4 56.6 L858.2 58.2 Z" fill="#666" stroke="none" stroke-width="0" />
<circle cx="854" cy="67" r="1.8" fill="none" stroke="#4a8a4a" stroke-width="0.9"/>
<rect x="854.4" y="68.4" width="4.4" height="3.6" fill="#8aa8c8" stroke="#456" stroke-width="0.6" />
<line x1="856" y1="70.4" x2="859.6" y2="73" stroke="#333" stroke-width="0.9" />
<line x1="881.6" y1="45" x2="895.4" y2="45" stroke="#333" stroke-width="0.8" />
<line x1="881.4" y1="42.4" x2="881.4" y2="47.6" stroke="#333" stroke-width="0.9" />
<line x1="895.6" y1="42.4" x2="895.6" y2="47.6" stroke="#333" stroke-width="0.9" />
<path d="M881.6 45 L883.6 44 L883.6 46 Z" fill="#333" stroke="none" stroke-width="0" />
<path d="M895.4 45 L893.4 44 L893.4 46 Z" fill="#333" stroke="none" stroke-width="0" />
<rect x="880.4" y="48.6" width="15.8" height="3.2" fill="#f2c020" stroke="#a87808" stroke-width="0.6" />
<text x="878" y="63.6" font-size="6.6" fill="#3a3a3a" textLength="21" lengthAdjust="spacingAndGlyphs" >Messen</text>
<circle cx="889" cy="67.3" r="0.75" fill="#2a2a2a" stroke="none" stroke-width="0"/>
<path d="M908.4 42.4 L912.4 41 L913.2 37.6 L914 41.6 L912.4 44.6 Z" fill="#e8e8e8" stroke="#555" stroke-width="0.6" />
<rect x="912.6" y="43.6" width="3.4" height="3.4" fill="#222" stroke="none" stroke-width="1" />
<circle cx="915" cy="39.6" r="1.2" fill="#f0b020" stroke="none" stroke-width="0"/>
<line x1="908.2" y1="55.6" x2="916.2" y2="55.6" stroke="#555" stroke-width="0.8" />
<line x1="912.2" y1="51.4" x2="912.2" y2="59.8" stroke="#555" stroke-width="0.8" />
<rect x="908.8" y="64.8" width="6.2" height="7.8" fill="#e8e8e8" stroke="#666" stroke-width="0.8" />
<rect x="909.8" y="65.8" width="4.2" height="1.6" fill="#8a8a8a" stroke="none" stroke-width="1" />
<line x1="909.8" y1="69" x2="914" y2="69" stroke="#888" stroke-width="0.6" />
<line x1="909.8" y1="70.8" x2="914" y2="70.8" stroke="#888" stroke-width="0.6" />
<rect x="941" y="39.4" width="10" height="13.4" fill="#c9c0ae" stroke="#6a6458" stroke-width="0.8" rx="1"/>
<rect x="944" y="38.2" width="4" height="2.2" fill="#999" stroke="#666" stroke-width="0.5" />
<path d="M945.4 43 L951.4 43 L954.6 45.6 L954.6 54.4 L945.4 54.4 Z" fill="#fafafa" stroke="#777" stroke-width="0.7" />
<line x1="947" y1="48" x2="952.6" y2="48" stroke="#ccc" stroke-width="0.5" />
<line x1="947" y1="50" x2="952.6" y2="50" stroke="#ccc" stroke-width="0.5" />
<text x="935" y="63.6" font-size="6.6" fill="#3a3a3a" textLength="25" lengthAdjust="spacingAndGlyphs" >Einfügen</text>
<circle cx="947.5" cy="67.3" r="0.75" fill="#2a2a2a" stroke="none" stroke-width="0"/>
<line x1="969.6" y1="39.4" x2="976.4" y2="46" stroke="#444" stroke-width="0.9" />
<line x1="976.4" y1="39.4" x2="969.6" y2="46" stroke="#444" stroke-width="0.9" />
<circle cx="970" cy="46" r="0.9" fill="none" stroke="#444" stroke-width="0.6"/>
<circle cx="976" cy="46" r="0.9" fill="none" stroke="#444" stroke-width="0.6"/>
<path d="M968.8 53 L973 53 L973 60 L968.8 60 Z" fill="#eee" stroke="#666" stroke-width="0.7" />
<path d="M971 54.6 L975 54.6 L977 56.4 L977 61.4 L971 61.4 Z" fill="#fafafa" stroke="#666" stroke-width="0.7" />
<defs><filter id="soft" x="0" y="0" width="1" height="1" filterUnits="objectBoundingBox"><feGaussianBlur stdDeviation="0.38"/></filter></defs>
<g filter="url(#soft)"><rect x="0" y="102" width="1024" height="466" fill="#000"/>
<line x1="25.5" y1="102" x2="25.5" y2="568" stroke="#d0003c" stroke-width="1" />
<line x1="25.5" y1="109.4" x2="1024" y2="109.4" stroke="#d0003c" stroke-width="1" />
<line x1="0" y1="188.2" x2="25.5" y2="185" stroke="#d0003c" stroke-width="1" />
<line x1="27" y1="122.5" x2="1024" y2="122.5" stroke="#a010c8" stroke-width="1.1" />
<line x1="27" y1="126.7" x2="1024" y2="126.7" stroke="#a010c8" stroke-width="1.1" />
<path d="M50.2 109.6 Q43.599999999999994 112.2 42.4 121.8" fill="none" stroke="#8a10b0" stroke-width="0.9" />
<line x1="42.4" y1="109.6" x2="42.4" y2="122.4" stroke="#8a10b0" stroke-width="0.9" />
<line x1="28.2" y1="109.6" x2="28.2" y2="122.4" stroke="#a010c8" stroke-width="1" />
<path d="M25.0 127 L45.8 127 L40.4 130.4 L30.4 130.4 Z" fill="none" stroke="#a010c8" stroke-width="0.9" />
<line x1="32.0" y1="130.4" x2="32.0" y2="135" stroke="#a010c8" stroke-width="0.9" />
<line x1="38.8" y1="130.4" x2="38.8" y2="135" stroke="#a010c8" stroke-width="0.9" />
<ellipse cx="35.4" cy="136.6" rx="6.6" ry="1.7" fill="none" stroke="#a010c8" stroke-width="0.9"/>
<path d="M32.8 138.2 L34.6 148.8 L36.199999999999996 148.8 L38.0 138.2" fill="none" stroke="#a010c8" stroke-width="0.9" />
<line x1="35.4" y1="138" x2="35.4" y2="148.6" stroke="#a010c8" stroke-width="1.2" />
<path d="M235.7 109.6 Q242.3 112.2 243.5 121.8" fill="none" stroke="#8a10b0" stroke-width="0.9" />
<line x1="243.5" y1="109.6" x2="243.5" y2="122.4" stroke="#8a10b0" stroke-width="0.9" />
<path d="M265.3 109.6 Q258.7 112.2 257.5 121.8" fill="none" stroke="#8a10b0" stroke-width="0.9" />
<line x1="257.5" y1="109.6" x2="257.5" y2="122.4" stroke="#8a10b0" stroke-width="0.9" />
<path d="M240.1 127 L260.9 127 L255.5 130.4 L245.5 130.4 Z" fill="none" stroke="#a010c8" stroke-width="0.9" />
<line x1="247.1" y1="130.4" x2="247.1" y2="135" stroke="#a010c8" stroke-width="0.9" />
<line x1="253.9" y1="130.4" x2="253.9" y2="135" stroke="#a010c8" stroke-width="0.9" />
<ellipse cx="250.5" cy="136.6" rx="6.6" ry="1.7" fill="none" stroke="#a010c8" stroke-width="0.9"/>
<path d="M247.9 138.2 L249.7 148.8 L251.3 148.8 L253.1 138.2" fill="none" stroke="#a010c8" stroke-width="0.9" />
<line x1="250.5" y1="138" x2="250.5" y2="148.6" stroke="#a010c8" stroke-width="1.2" />
<path d="M439.59999999999997 109.6 Q446.2 112.2 447.4 121.8" fill="none" stroke="#8a10b0" stroke-width="0.9" />
<line x1="447.4" y1="109.6" x2="447.4" y2="122.4" stroke="#8a10b0" stroke-width="0.9" />
<path d="M469.2 109.6 Q462.59999999999997 112.2 461.4 121.8" fill="none" stroke="#8a10b0" stroke-width="0.9" />
<line x1="461.4" y1="109.6" x2="461.4" y2="122.4" stroke="#8a10b0" stroke-width="0.9" />
<path d="M444.0 127 L464.79999999999995 127 L459.4 130.4 L449.4 130.4 Z" fill="none" stroke="#a010c8" stroke-width="0.9" />
<line x1="451.0" y1="130.4" x2="451.0" y2="135" stroke="#a010c8" stroke-width="0.9" />
<line x1="457.79999999999995" y1="130.4" x2="457.79999999999995" y2="135" stroke="#a010c8" stroke-width="0.9" />
<ellipse cx="454.4" cy="136.6" rx="6.6" ry="1.7" fill="none" stroke="#a010c8" stroke-width="0.9"/>
<path d="M451.79999999999995 138.2 L453.59999999999997 148.8 L455.2 148.8 L457.0 138.2" fill="none" stroke="#a010c8" stroke-width="0.9" />
<line x1="454.4" y1="138" x2="454.4" y2="148.6" stroke="#a010c8" stroke-width="1.2" />
<path d="M643.4000000000001 109.6 Q650.0 112.2 651.2 121.8" fill="none" stroke="#8a10b0" stroke-width="0.9" />
<line x1="651.2" y1="109.6" x2="651.2" y2="122.4" stroke="#8a10b0" stroke-width="0.9" />
<path d="M673.0 109.6 Q666.4000000000001 112.2 665.2 121.8" fill="none" stroke="#8a10b0" stroke-width="0.9" />
<line x1="665.2" y1="109.6" x2="665.2" y2="122.4" stroke="#8a10b0" stroke-width="0.9" />
<path d="M647.8000000000001 127 L668.6 127 L663.2 130.4 L653.2 130.4 Z" fill="none" stroke="#a010c8" stroke-width="0.9" />
<line x1="654.8000000000001" y1="130.4" x2="654.8000000000001" y2="135" stroke="#a010c8" stroke-width="0.9" />
<line x1="661.6" y1="130.4" x2="661.6" y2="135" stroke="#a010c8" stroke-width="0.9" />
<ellipse cx="658.2" cy="136.6" rx="6.6" ry="1.7" fill="none" stroke="#a010c8" stroke-width="0.9"/>
<path d="M655.6 138.2 L657.4000000000001 148.8 L659.0 148.8 L660.8000000000001 138.2" fill="none" stroke="#a010c8" stroke-width="0.9" />
<line x1="658.2" y1="138" x2="658.2" y2="148.6" stroke="#a010c8" stroke-width="1.2" />
<path d="M847.0 109.6 Q853.5999999999999 112.2 854.8 121.8" fill="none" stroke="#8a10b0" stroke-width="0.9" />
<line x1="854.8" y1="109.6" x2="854.8" y2="122.4" stroke="#8a10b0" stroke-width="0.9" />
<path d="M876.5999999999999 109.6 Q870.0 112.2 868.8 121.8" fill="none" stroke="#8a10b0" stroke-width="0.9" />
<line x1="868.8" y1="109.6" x2="868.8" y2="122.4" stroke="#8a10b0" stroke-width="0.9" />
<path d="M851.4 127 L872.1999999999999 127 L866.8 130.4 L856.8 130.4 Z" fill="none" stroke="#a010c8" stroke-width="0.9" />
<line x1="858.4" y1="130.4" x2="858.4" y2="135" stroke="#a010c8" stroke-width="0.9" />
<line x1="865.1999999999999" y1="130.4" x2="865.1999999999999" y2="135" stroke="#a010c8" stroke-width="0.9" />
<ellipse cx="861.8" cy="136.6" rx="6.6" ry="1.7" fill="none" stroke="#a010c8" stroke-width="0.9"/>
<path d="M859.1999999999999 138.2 L861.0 148.8 L862.5999999999999 148.8 L864.4 138.2" fill="none" stroke="#a010c8" stroke-width="0.9" />
<line x1="861.8" y1="138" x2="861.8" y2="148.6" stroke="#a010c8" stroke-width="1.2" />
<line x1="265" y1="142.4" x2="847.2" y2="142.4" stroke="#0a8ccc" stroke-width="1.1" />
<line x1="262.4" y1="150.1" x2="849.6" y2="150.1" stroke="#0a8ccc" stroke-width="1.1" />
<line x1="265" y1="140.6" x2="265" y2="166" stroke="#0a8ccc" stroke-width="0.8" />
<line x1="847" y1="140.6" x2="847" y2="156" stroke="#0a8ccc" stroke-width="0.8" />
<line x1="456.3" y1="175.2" x2="655.5" y2="175.2" stroke="#0a8ccc" stroke-width="1" />
<line x1="456.3" y1="166" x2="456.3" y2="177" stroke="#0a8ccc" stroke-width="0.8" />
<line x1="655.5" y1="166" x2="655.5" y2="177" stroke="#0a8ccc" stroke-width="0.8" />
<defs>
<pattern id="dotH" width="2.2" height="3" patternUnits="userSpaceOnUse"><rect width="2.2" height="3" fill="#34501a"/><rect x="0" y="0" width="1.1" height="3" fill="#d4e0a0"/></pattern>
<pattern id="dotV" width="4" height="2.2" patternUnits="userSpaceOnUse"><rect width="4" height="2.2" fill="#5a6a3a"/><rect x="0" y="0" width="4" height="1.1" fill="#c8d098"/></pattern>
<pattern id="dotF" width="2.2" height="3.6" patternUnits="userSpaceOnUse"><rect width="2.2" height="3.6" fill="#1c6a14"/><rect x="0" y="0" width="1.1" height="1.6" fill="#d0dc90"/></pattern>
<pattern id="stripe" x="448.17" width="4.93" height="10" patternUnits="userSpaceOnUse"><rect x="0" y="0" width="2.2" height="10" fill="#7aaae4"/></pattern>
<pattern id="stripeR" x="558.1" width="4.93" height="10" patternUnits="userSpaceOnUse"><rect x="0" y="0" width="2.2" height="10" fill="#7aaae4"/></pattern>
<pattern id="hatchO" width="6" height="6" patternUnits="userSpaceOnUse"><rect width="6" height="6" fill="#3a3000"/><path d="M0 6 L3 0 L6 6" stroke="#d8a818" stroke-width="0.9" fill="none"/></pattern>
</defs>
<rect x="273.4" y="154.4" width="182.90000000000003" height="2.9" fill="url(#dotH)" stroke="none" stroke-width="1" />
<line x1="273.4" y1="154.3" x2="456.3" y2="154.3" stroke="#e8f0b0" stroke-width="0.5" />
<line x1="273.4" y1="163.6" x2="456.3" y2="163.6" stroke="#e4e4e4" stroke-width="0.9" />
<rect x="497.5" y="154.4" width="117.10000000000002" height="2.9" fill="url(#dotH)" stroke="none" stroke-width="1" />
<line x1="497.5" y1="154.3" x2="614.6" y2="154.3" stroke="#e8f0b0" stroke-width="0.5" />
<line x1="497.5" y1="163.6" x2="614.6" y2="163.6" stroke="#e4e4e4" stroke-width="0.9" />
<rect x="655.5" y="154.4" width="183.10000000000002" height="2.9" fill="url(#dotH)" stroke="none" stroke-width="1" />
<line x1="655.5" y1="154.3" x2="838.6" y2="154.3" stroke="#e8f0b0" stroke-width="0.5" />
<line x1="655.5" y1="163.6" x2="838.6" y2="163.6" stroke="#e4e4e4" stroke-width="0.9" />
<rect x="275" y="157.3" width="3.6" height="6.3" fill="#6f7a5a" stroke="#aab08a" stroke-width="0.5" />
<rect x="336.5" y="157.3" width="3.6" height="6.3" fill="#6f7a5a" stroke="#aab08a" stroke-width="0.5" />
<rect x="397.5" y="157.3" width="3.6" height="6.3" fill="#6f7a5a" stroke="#aab08a" stroke-width="0.5" />
<rect x="554" y="157.3" width="3.6" height="6.3" fill="#6f7a5a" stroke="#aab08a" stroke-width="0.5" />
<rect x="712.9" y="157.3" width="3.6" height="6.3" fill="#6f7a5a" stroke="#aab08a" stroke-width="0.5" />
<rect x="775.5" y="157.3" width="3.6" height="6.3" fill="#6f7a5a" stroke="#aab08a" stroke-width="0.5" />
<rect x="834.5" y="157.3" width="3.6" height="6.3" fill="#6f7a5a" stroke="#aab08a" stroke-width="0.5" />
<rect x="456.3" y="154.4" width="3.6" height="13.8" fill="#2a8a1a" stroke="#88c860" stroke-width="0.5" />
<rect x="493.9" y="154.4" width="3.6" height="13.8" fill="#2a8a1a" stroke="#88c860" stroke-width="0.5" />
<rect x="456.3" y="165.6" width="41.19999999999999" height="2.6" fill="url(#dotH)" stroke="none" stroke-width="1" />
<line x1="456.3" y1="168.3" x2="497.5" y2="168.3" stroke="#e4e4e4" stroke-width="0.6" />
<line x1="459.90000000000003" y1="148.4" x2="459.90000000000003" y2="156.6" stroke="#0a8ccc" stroke-width="0.8" />
<line x1="493.9" y1="148.4" x2="493.9" y2="156.6" stroke="#0a8ccc" stroke-width="0.8" />
<rect x="614.6" y="154.4" width="3.6" height="13.8" fill="#2a8a1a" stroke="#88c860" stroke-width="0.5" />
<rect x="651.9" y="154.4" width="3.6" height="13.8" fill="#2a8a1a" stroke="#88c860" stroke-width="0.5" />
<rect x="614.6" y="165.6" width="40.89999999999998" height="2.6" fill="url(#dotH)" stroke="none" stroke-width="1" />
<line x1="614.6" y1="168.3" x2="655.5" y2="168.3" stroke="#e4e4e4" stroke-width="0.6" />
<line x1="618.2" y1="148.4" x2="618.2" y2="156.6" stroke="#0a8ccc" stroke-width="0.8" />
<line x1="651.9" y1="148.4" x2="651.9" y2="156.6" stroke="#0a8ccc" stroke-width="0.8" />
<line x1="504.6" y1="157" x2="504.6" y2="168.6" stroke="#0a8ccc" stroke-width="0.8" />
<line x1="497.5" y1="168.4" x2="506.5" y2="168.4" stroke="#0a8ccc" stroke-width="0.7" />
<line x1="607.4" y1="157" x2="607.4" y2="168.6" stroke="#0a8ccc" stroke-width="0.8" />
<line x1="412.6" y1="157" x2="412.6" y2="164" stroke="#0a8ccc" stroke-width="0.8" />
<line x1="699.4" y1="157" x2="699.4" y2="164" stroke="#0a8ccc" stroke-width="0.8" />
<line x1="474.5" y1="168.4" x2="474.5" y2="268.6" stroke="#d8d8d8" stroke-width="0.9" />
<line x1="474.5" y1="168" x2="474.5" y2="176" stroke="#0a8ccc" stroke-width="0.7" />
<line x1="484.3" y1="168.4" x2="484.3" y2="268.6" stroke="#d8d8d8" stroke-width="0.9" />
<line x1="484.3" y1="168" x2="484.3" y2="176" stroke="#0a8ccc" stroke-width="0.7" />
<line x1="627.3" y1="168.4" x2="627.3" y2="268.6" stroke="#d8d8d8" stroke-width="0.9" />
<line x1="627.3" y1="168" x2="627.3" y2="176" stroke="#0a8ccc" stroke-width="0.7" />
<line x1="637.6" y1="168.4" x2="637.6" y2="268.6" stroke="#d8d8d8" stroke-width="0.9" />
<line x1="637.6" y1="168" x2="637.6" y2="176" stroke="#0a8ccc" stroke-width="0.7" />
<rect x="265.8" y="171" width="4.599999999999966" height="397" fill="url(#dotV)" stroke="none" stroke-width="0" opacity="0.32"/>
<line x1="265.8" y1="154.4" x2="265.8" y2="568" stroke="#d8dc98" stroke-width="0.9" />
<line x1="270.4" y1="171" x2="270.4" y2="568" stroke="#d8dc98" stroke-width="0.9" />
<rect x="266.3" y="154.6" width="3.3" height="16.6" fill="#2a9a1a" stroke="#7ac850" stroke-width="0.5" />
<line x1="273.2" y1="157.3" x2="273.2" y2="386" stroke="#c8d8d8" stroke-width="0.8" />
<rect x="266.4" y="306.4" width="2.8" height="16.6" fill="#2a9a1a" stroke="#9ad870" stroke-width="0.5" />
<rect x="268.8" y="344" width="3" height="7.6" fill="#1a5a10" stroke="#5ad040" stroke-width="0.7" />
<rect x="268.8" y="431.6" width="3" height="7.2" fill="#1a5a10" stroke="#5ad040" stroke-width="0.7" />
<rect x="268.8" y="518.6" width="3" height="7.4" fill="#1a5a10" stroke="#5ad040" stroke-width="0.7" />
<rect x="841.4" y="171" width="4.600000000000023" height="397" fill="url(#dotV)" stroke="none" stroke-width="0" opacity="0.32"/>
<line x1="846.0" y1="154.4" x2="846.0" y2="566" stroke="#d8dc98" stroke-width="0.9" />
<line x1="841.4" y1="171" x2="841.4" y2="566" stroke="#d8dc98" stroke-width="0.9" />
<rect x="842.2" y="154.6" width="3.3" height="16.6" fill="#2a9a1a" stroke="#7ac850" stroke-width="0.5" />
<line x1="838.4" y1="157.3" x2="838.4" y2="221" stroke="#d0d0d0" stroke-width="0.9" />
<line x1="838.8" y1="237.6" x2="838.8" y2="386" stroke="#5ab8b8" stroke-width="0.8" />
<rect x="842.6" y="306.4" width="2.8" height="16.6" fill="#2a9a1a" stroke="#9ad870" stroke-width="0.5" />
<rect x="840.0" y="344" width="3" height="7.6" fill="#1a5a10" stroke="#5ad040" stroke-width="0.7" />
<rect x="840.0" y="431.6" width="3" height="7.2" fill="#1a5a10" stroke="#5ad040" stroke-width="0.7" />
<rect x="840.0" y="518.6" width="3" height="7.4" fill="#1a5a10" stroke="#5ad040" stroke-width="0.7" />
<line x1="284.7" y1="238" x2="284.7" y2="386" stroke="#5ab8b8" stroke-width="0.8" />
<line x1="284.7" y1="386" x2="284.7" y2="500" stroke="#d8e0e0" stroke-width="0.8" />
<line x1="827.5" y1="238" x2="827.5" y2="386" stroke="#5ab8b8" stroke-width="0.8" />
<line x1="827.5" y1="386" x2="827.5" y2="529.6" stroke="#d8e0e0" stroke-width="0.8" />
<line x1="855.6" y1="154.6" x2="855.6" y2="568" stroke="#0a8ccc" stroke-width="0.9" />
<line x1="862.8" y1="154.6" x2="862.8" y2="568" stroke="#0a8ccc" stroke-width="0.9" />
<line x1="847" y1="154.6" x2="864" y2="154.6" stroke="#0a8ccc" stroke-width="0.8" />
<line x1="846" y1="171.4" x2="857" y2="171.4" stroke="#0a8ccc" stroke-width="0.7" />
<line x1="846" y1="306.4" x2="857" y2="306.4" stroke="#0a8ccc" stroke-width="0.7" />
<line x1="846" y1="323.8" x2="857" y2="323.8" stroke="#0a8ccc" stroke-width="0.7" />
<line x1="828" y1="324.2" x2="836.4" y2="324.2" stroke="#e8e84a" stroke-width="1.2" />
<line x1="273.4" y1="171.4" x2="292" y2="171.4" stroke="#58cccc" stroke-width="0.9" />
<path d="M277 237.9 L276.7 183.7 L280.2 171.4" fill="none" stroke="#58cccc" stroke-width="0.9" />
<path d="M288 237.9 L288.4 183.7 L289.8 176 L285.2 171.4" fill="none" stroke="#58cccc" stroke-width="0.9" />
<line x1="277" y1="237.9" x2="288" y2="237.9" stroke="#58cccc" stroke-width="0.9" />
<path d="M276.7 183.7 Q282.5 180.6 288.4 183.7" fill="none" stroke="#58cccc" stroke-width="0.9" />
<path d="M284.9 171.4 L282.5 182" fill="none" stroke="#58cccc" stroke-width="0.7" />
<path d="M290.5 171.4 L300.7 182.2 L300.7 195" fill="none" stroke="#58cccc" stroke-width="0.9" />
<path d="M292 183.4 L292 195 L300.7 195" fill="none" stroke="#58cccc" stroke-width="0.9" />
<path d="M292 183.4 L296 186.2 L300.7 182.4" fill="none" stroke="#58cccc" stroke-width="0.9" />
<path d="M290.5 171.4 L289.7 177 L292 183.4" fill="none" stroke="#58cccc" stroke-width="0.8" />
<rect x="288" y="195" width="12.699999999999989" height="150" fill="none" stroke="#2c6e6a" stroke-width="0.9" />
<circle cx="312.3" cy="176" r="6.5" fill="none" stroke="#58cccc" stroke-width="0.9"/>
<circle cx="312.3" cy="176" r="5" fill="none" stroke="#58cccc" stroke-width="0.6"/>
<path d="M306.7 179.4 L307.7 211.6" fill="none" stroke="#58cccc" stroke-width="0.9" />
<path d="M317.90000000000003 179.4 L316.90000000000003 211.6" fill="none" stroke="#58cccc" stroke-width="0.9" />
<line x1="307.7" y1="211.6" x2="316.90000000000003" y2="211.6" stroke="#58cccc" stroke-width="0.9" />
<rect x="305" y="211.6" width="14.399999999999977" height="133.4" fill="none" stroke="#2c6e6a" stroke-width="0.9" />
<circle cx="326.6" cy="176" r="6.5" fill="none" stroke="#58cccc" stroke-width="0.9"/>
<circle cx="326.6" cy="176" r="5" fill="none" stroke="#58cccc" stroke-width="0.6"/>
<path d="M321.0 179.4 L322.0 226.4" fill="none" stroke="#58cccc" stroke-width="0.9" />
<path d="M332.20000000000005 179.4 L331.20000000000005 226.4" fill="none" stroke="#58cccc" stroke-width="0.9" />
<line x1="322.0" y1="226.4" x2="331.20000000000005" y2="226.4" stroke="#58cccc" stroke-width="0.9" />
<rect x="320.2" y="226.4" width="14.0" height="118.6" fill="none" stroke="#2c6e6a" stroke-width="0.9" />
<path d="M337.7 240 L335.4 172.6 L346.9 172.6 L343.4 240 L337.7 240" fill="none" stroke="#58cccc" stroke-width="0.9" />
<rect x="334.3" y="240" width="9.099999999999966" height="105" fill="none" stroke="#2c6e6a" stroke-width="0.9" />
<path d="M342.4 274 L342.4 167.2 Q342.4 164.2 346.6 164.2 Q350.8 164.2 350.8 167.2 L350.8 274" fill="none" stroke="#58cccc" stroke-width="0.9" />
<path d="M350.7 253.7 L349.1 193 L360.6 193 L358.3 253.7 L350.7 253.7" fill="none" stroke="#58cccc" stroke-width="0.9" />
<path d="M356 274 L356 179.4 L364 179.4 L364 274" fill="none" stroke="#58cccc" stroke-width="0.9" />
<path d="M365.1 253.7 L362.2 211.4 L373.6 211.4 L372 253.7 L365.1 253.7" fill="none" stroke="#58cccc" stroke-width="0.9" />
<line x1="351" y1="256" x2="351" y2="345" stroke="#2c6e6a" stroke-width="0.9" />
<line x1="356.9" y1="256" x2="356.9" y2="345" stroke="#2c6e6a" stroke-width="0.9" />
<line x1="363.6" y1="256" x2="363.6" y2="345" stroke="#2c6e6a" stroke-width="0.9" />
<line x1="372.4" y1="256" x2="372.4" y2="345" stroke="#2c6e6a" stroke-width="0.9" />
<rect x="362.9" y="260" width="9.800000000000011" height="14.199999999999989" fill="none" stroke="#58cccc" stroke-width="0.8" />
<rect x="366.6" y="263.6" width="2" height="1.2" fill="#f0f0f0" stroke="none" stroke-width="1" />
<rect x="374.6" y="275.8" width="4" height="4.4" fill="#1a3a10" stroke="#0a8ccc" stroke-width="0.7" />
<rect x="375.6" y="276.6" width="2.2" height="2.8" fill="#d8e040" stroke="none" stroke-width="1" />
<line x1="373" y1="274.6" x2="381" y2="274.6" stroke="#0a8ccc" stroke-width="0.7" />
<line x1="373" y1="281.2" x2="381" y2="281.2" stroke="#0a8ccc" stroke-width="0.7" />
<rect x="287.8" y="274.2" width="85.19999999999999" height="7.0" fill="none" stroke="#b8820c" stroke-width="1" />
<path d="M336 274.2 L336 278 L342 278" fill="none" stroke="#b8820c" stroke-width="0.8" />
<path d="M352 277.6 L358 277.6" fill="none" stroke="#b8820c" stroke-width="0.8" />
<path d="M352 274.2 L352 277.6" fill="none" stroke="#b8820c" stroke-width="0.8" />
<path d="M364 278 L368 278 L368 274.2" fill="none" stroke="#b8820c" stroke-width="0.8" />
<line x1="301.6" y1="281.2" x2="301.6" y2="385.6" stroke="#b8820c" stroke-width="0.9" />
<line x1="305.4" y1="281.2" x2="305.4" y2="385.6" stroke="#b8820c" stroke-width="0.9" />
<line x1="287.8" y1="340.2" x2="372.4" y2="340.2" stroke="#2c6e6a" stroke-width="0.7" />
<line x1="287.8" y1="345" x2="372.4" y2="345" stroke="#2c6e6a" stroke-width="0.9" />
<rect x="292.7" y="345" width="4.399999999999977" height="40.39999999999998" fill="none" stroke="#2c6e6a" stroke-width="0.9" />
<rect x="293.29999999999995" y="344" width="3.2" height="1.4" fill="#3aa890" stroke="none" stroke-width="1" />
<rect x="309.1" y="345" width="4.399999999999977" height="40.39999999999998" fill="none" stroke="#2c6e6a" stroke-width="0.9" />
<rect x="309.7" y="344" width="3.2" height="1.4" fill="#3aa890" stroke="none" stroke-width="1" />
<rect x="324.1" y="345" width="4.399999999999977" height="40.39999999999998" fill="none" stroke="#2c6e6a" stroke-width="0.9" />
<rect x="324.7" y="344" width="3.2" height="1.4" fill="#3aa890" stroke="none" stroke-width="1" />
<rect x="337.6" y="345" width="4.399999999999977" height="40.39999999999998" fill="none" stroke="#2c6e6a" stroke-width="0.9" />
<rect x="338.2" y="344" width="3.2" height="1.4" fill="#3aa890" stroke="none" stroke-width="1" />
<rect x="351.8" y="345" width="4.399999999999977" height="40.39999999999998" fill="none" stroke="#2c6e6a" stroke-width="0.9" />
<rect x="352.4" y="344" width="3.2" height="1.4" fill="#3aa890" stroke="none" stroke-width="1" />
<rect x="365.3" y="345" width="4.399999999999977" height="40.39999999999998" fill="none" stroke="#2c6e6a" stroke-width="0.9" />
<rect x="365.9" y="344" width="3.2" height="1.4" fill="#3aa890" stroke="none" stroke-width="1" />
<path d="M342.3 345 L342.3 353.4 L346.1 384.8" fill="none" stroke="#58cccc" stroke-width="0.8" />
<path d="M350.7 345 L350.7 353.4 L346.9 384.8" fill="none" stroke="#58cccc" stroke-width="0.8" />
<line x1="342.3" y1="353.4" x2="350.7" y2="353.4" stroke="#58cccc" stroke-width="0.8" />
<path d="M355.9 345 L355.9 353.4 L359.85 384.8" fill="none" stroke="#58cccc" stroke-width="0.8" />
<path d="M364.6 345 L364.6 353.4 L360.65 384.8" fill="none" stroke="#58cccc" stroke-width="0.8" />
<line x1="355.9" y1="353.4" x2="364.6" y2="353.4" stroke="#58cccc" stroke-width="0.8" />
<line x1="380.5" y1="274.6" x2="380.5" y2="386" stroke="#0a8ccc" stroke-width="0.9" />
<rect x="278.6" y="382.3" width="12.399999999999977" height="4.099999999999966" fill="none" stroke="#b8820c" stroke-width="1" />
<path d="M410.5 362 L410.5 252.6 L416.6 252.6 L416.6 362" fill="none" stroke="#58cccc" stroke-width="0.9" />
<path d="M410.5 362 L413.05 384.6" fill="none" stroke="#58cccc" stroke-width="0.8" />
<path d="M416.6 362 L414.05 384.6" fill="none" stroke="#58cccc" stroke-width="0.8" />
<line x1="410.5" y1="362" x2="416.6" y2="362" stroke="#58cccc" stroke-width="0.6" />
<path d="M432.4 360 L432.4 276.6 L437.6 276.6 L437.6 360" fill="none" stroke="#58cccc" stroke-width="0.9" />
<path d="M432.4 360 L434.5 384.6" fill="none" stroke="#58cccc" stroke-width="0.8" />
<path d="M437.6 360 L435.5 384.6" fill="none" stroke="#58cccc" stroke-width="0.8" />
<line x1="432.4" y1="360" x2="437.6" y2="360" stroke="#58cccc" stroke-width="0.6" />
<path d="M442.4 360 L442.4 286.4 L447.4 286.4 L447.4 360" fill="none" stroke="#58cccc" stroke-width="0.9" />
<path d="M442.4 360 L444.4 384.6" fill="none" stroke="#58cccc" stroke-width="0.8" />
<path d="M447.4 360 L445.4 384.6" fill="none" stroke="#58cccc" stroke-width="0.8" />
<line x1="442.4" y1="360" x2="447.4" y2="360" stroke="#58cccc" stroke-width="0.6" />
<path d="M452.6 360 L452.6 294.8 L456.2 294.8 L456.2 360" fill="none" stroke="#58cccc" stroke-width="0.9" />
<path d="M452.6 360 L453.9 384.6" fill="none" stroke="#58cccc" stroke-width="0.8" />
<path d="M456.2 360 L454.9 384.6" fill="none" stroke="#58cccc" stroke-width="0.8" />
<line x1="452.6" y1="360" x2="456.2" y2="360" stroke="#58cccc" stroke-width="0.6" />
<path d="M443 246.6 L443 200.8 L448.6 200.8 L448.6 246.6" fill="none" stroke="#58cccc" stroke-width="0.9" />
<path d="M443 246.6 L445.3 267.8" fill="none" stroke="#58cccc" stroke-width="0.8" />
<path d="M448.6 246.6 L446.3 267.8" fill="none" stroke="#58cccc" stroke-width="0.8" />
<line x1="443" y1="246.6" x2="448.6" y2="246.6" stroke="#58cccc" stroke-width="0.6" />
<path d="M467.3 248 L467.3 213.6 L472 213.6 L472 248" fill="none" stroke="#58cccc" stroke-width="0.9" />
<path d="M467.3 248 L469.15 267.8" fill="none" stroke="#58cccc" stroke-width="0.8" />
<path d="M472 248 L470.15 267.8" fill="none" stroke="#58cccc" stroke-width="0.8" />
<line x1="467.3" y1="248" x2="472" y2="248" stroke="#58cccc" stroke-width="0.6" />
<path d="M507 247.4 L507 231 L510 231 L510 247.4" fill="none" stroke="#58cccc" stroke-width="0.9" />
<path d="M507 247.4 L508.0 267.8" fill="none" stroke="#58cccc" stroke-width="0.8" />
<path d="M510 247.4 L509.0 267.8" fill="none" stroke="#58cccc" stroke-width="0.8" />
<line x1="507" y1="247.4" x2="510" y2="247.4" stroke="#58cccc" stroke-width="0.6" />
<path d="M534.8 250 L534.8 239.4 L537 239.4 L537 250" fill="none" stroke="#58cccc" stroke-width="0.9" />
<path d="M534.8 250 L535.4 267.8" fill="none" stroke="#58cccc" stroke-width="0.8" />
<path d="M537 250 L536.4 267.8" fill="none" stroke="#58cccc" stroke-width="0.8" />
<line x1="534.8" y1="250" x2="537" y2="250" stroke="#58cccc" stroke-width="0.6" />
<path d="M545.8 250 L545.8 241.4 L548 241.4 L548 250" fill="none" stroke="#58cccc" stroke-width="0.9" />
<path d="M545.8 250 L546.4 267.8" fill="none" stroke="#58cccc" stroke-width="0.8" />
<path d="M548 250 L547.4 267.8" fill="none" stroke="#58cccc" stroke-width="0.8" />
<line x1="545.8" y1="250" x2="548" y2="250" stroke="#58cccc" stroke-width="0.6" />
<path d="M823.7 237.6 L823.7 183.7 Q821 179 821.6 175.6 Q823.4 171.2 828 171 Q833.6 171.2 834.5 180.6 L834.5 237.6" fill="none" stroke="#58cccc" stroke-width="0.9" />
<line x1="823.7" y1="237.6" x2="838.8" y2="237.6" stroke="#58cccc" stroke-width="0.9" />
<path d="M823.7 183.7 Q828.6 180 834.5 182.4" fill="none" stroke="#58cccc" stroke-width="0.8" />
<path d="M811 194.8 L811 183.7 L819 170.4 Q823 170.6 824.6 172.4" fill="none" stroke="#58cccc" stroke-width="0.9" />
<path d="M811 183.7 Q815.4 186.4 819.8 183.7 L819.8 194.8" fill="none" stroke="#58cccc" stroke-width="0.8" />
<line x1="811" y1="194.8" x2="823.7" y2="194.8" stroke="#58cccc" stroke-width="0.9" />
<path d="M819.8 183.7 Q818.4 177.6 821.6 175.6" fill="none" stroke="#58cccc" stroke-width="0.8" />
<rect x="809.8" y="194.8" width="13.9" height="150.2" fill="none" stroke="#2c6e6a" stroke-width="0.9" />
<rect x="826" y="237.6" width="12.8" height="36.6" fill="none" stroke="#58cccc" stroke-width="0.8" />
<circle cx="799.7" cy="174.6" r="6.5" fill="none" stroke="#58cccc" stroke-width="0.9"/>
<circle cx="799.7" cy="174.6" r="5" fill="none" stroke="#58cccc" stroke-width="0.6"/>
<path d="M805.3 178.0 L804.3 211.6" fill="none" stroke="#58cccc" stroke-width="0.9" />
<path d="M794.1 178.0 L795.1 211.6" fill="none" stroke="#58cccc" stroke-width="0.9" />
<line x1="804.3" y1="211.6" x2="795.1" y2="211.6" stroke="#58cccc" stroke-width="0.9" />
<rect x="792.6" y="211.6" width="14.399999999999977" height="133.4" fill="none" stroke="#2c6e6a" stroke-width="0.9" />
<circle cx="785.4" cy="174.6" r="6.5" fill="none" stroke="#58cccc" stroke-width="0.9"/>
<circle cx="785.4" cy="174.6" r="5" fill="none" stroke="#58cccc" stroke-width="0.6"/>
<path d="M791.0 178.0 L790.0 226.4" fill="none" stroke="#58cccc" stroke-width="0.9" />
<path d="M779.8 178.0 L780.8 226.4" fill="none" stroke="#58cccc" stroke-width="0.9" />
<line x1="790.0" y1="226.4" x2="780.8" y2="226.4" stroke="#58cccc" stroke-width="0.9" />
<rect x="777.8" y="226.4" width="14.0" height="118.6" fill="none" stroke="#2c6e6a" stroke-width="0.9" />
<path d="M774.3 240 L776.6 172.6 L765.1 172.6 L768.6 240 L774.3 240" fill="none" stroke="#58cccc" stroke-width="0.9" />
<rect x="768.6" y="240" width="9.099999999999966" height="105" fill="none" stroke="#2c6e6a" stroke-width="0.9" />
<path d="M769.6 274 L769.6 171.6 Q769.6 168.6 765.4 168.6 Q761.2 168.6 761.2 171.6 L761.2 274" fill="none" stroke="#58cccc" stroke-width="0.9" />
<path d="M761.3 253.7 L762.9 193 L751.4 193 L753.7 253.7 L761.3 253.7" fill="none" stroke="#58cccc" stroke-width="0.9" />
<path d="M756.0 274 L756.0 188.6 L748.0 188.6 L748.0 274" fill="none" stroke="#58cccc" stroke-width="0.9" />
<line x1="761.0" y1="256" x2="761.0" y2="345" stroke="#2c6e6a" stroke-width="0.9" />
<line x1="755.1" y1="256" x2="755.1" y2="345" stroke="#2c6e6a" stroke-width="0.9" />
<line x1="748.4" y1="256" x2="748.4" y2="345" stroke="#2c6e6a" stroke-width="0.9" />
<line x1="739.6" y1="256" x2="739.6" y2="345" stroke="#2c6e6a" stroke-width="0.9" />
<rect x="739.3" y="260" width="9.800000000000011" height="14.199999999999989" fill="none" stroke="#58cccc" stroke-width="0.8" />
<rect x="743.4" y="263.6" width="2" height="1.2" fill="#f0f0f0" stroke="none" stroke-width="1" />
<rect x="739.0" y="274.2" width="85.19999999999999" height="7.0" fill="none" stroke="#b8820c" stroke-width="1" />
<path d="M776.0 274.2 L776.0 278 L770.0 278" fill="none" stroke="#b8820c" stroke-width="0.8" />
<path d="M760.0 277.6 L754.0 277.6" fill="none" stroke="#b8820c" stroke-width="0.8" />
<path d="M760.0 274.2 L760.0 277.6" fill="none" stroke="#b8820c" stroke-width="0.8" />
<path d="M748.0 278 L744.0 278 L744.0 274.2" fill="none" stroke="#b8820c" stroke-width="0.8" />
<line x1="810.4" y1="281.2" x2="810.4" y2="385.6" stroke="#b8820c" stroke-width="0.9" />
<line x1="806.6" y1="281.2" x2="806.6" y2="385.6" stroke="#b8820c" stroke-width="0.9" />
<line x1="824.2" y1="340.2" x2="739.6" y2="340.2" stroke="#2c6e6a" stroke-width="0.7" />
<line x1="824.2" y1="345" x2="739.6" y2="345" stroke="#2c6e6a" stroke-width="0.9" />
<rect x="814.9" y="345" width="4.399999999999977" height="40.39999999999998" fill="none" stroke="#2c6e6a" stroke-width="0.9" />
<rect x="815.5" y="344" width="3.2" height="1.4" fill="#3aa890" stroke="none" stroke-width="1" />
<rect x="798.5" y="345" width="4.399999999999977" height="40.39999999999998" fill="none" stroke="#2c6e6a" stroke-width="0.9" />
<rect x="799.1" y="344" width="3.2" height="1.4" fill="#3aa890" stroke="none" stroke-width="1" />
<rect x="783.5" y="345" width="4.399999999999977" height="40.39999999999998" fill="none" stroke="#2c6e6a" stroke-width="0.9" />
<rect x="784.1" y="344" width="3.2" height="1.4" fill="#3aa890" stroke="none" stroke-width="1" />
<rect x="770.0" y="345" width="4.399999999999977" height="40.39999999999998" fill="none" stroke="#2c6e6a" stroke-width="0.9" />
<rect x="770.6" y="344" width="3.2" height="1.4" fill="#3aa890" stroke="none" stroke-width="1" />
<rect x="755.8" y="345" width="4.399999999999977" height="40.39999999999998" fill="none" stroke="#2c6e6a" stroke-width="0.9" />
<rect x="756.4" y="344" width="3.2" height="1.4" fill="#3aa890" stroke="none" stroke-width="1" />
<rect x="742.3" y="345" width="4.399999999999977" height="40.39999999999998" fill="none" stroke="#2c6e6a" stroke-width="0.9" />
<rect x="742.9" y="344" width="3.2" height="1.4" fill="#3aa890" stroke="none" stroke-width="1" />
<path d="M769.7 345 L769.7 353.4 L765.9 384.8" fill="none" stroke="#58cccc" stroke-width="0.8" />
<path d="M761.3 345 L761.3 353.4 L765.1 384.8" fill="none" stroke="#58cccc" stroke-width="0.8" />
<line x1="769.7" y1="353.4" x2="761.3" y2="353.4" stroke="#58cccc" stroke-width="0.8" />
<path d="M756.1 345 L756.1 353.4 L752.15 384.8" fill="none" stroke="#58cccc" stroke-width="0.8" />
<path d="M747.4 345 L747.4 353.4 L751.35 384.8" fill="none" stroke="#58cccc" stroke-width="0.8" />
<line x1="756.1" y1="353.4" x2="747.4" y2="353.4" stroke="#58cccc" stroke-width="0.8" />
<rect x="821.0" y="382.3" width="12.399999999999977" height="4.099999999999966" fill="none" stroke="#b8820c" stroke-width="1" />
<path d="M701.5 362 L701.5 252.6 L695.4 252.6 L695.4 362" fill="none" stroke="#58cccc" stroke-width="0.9" />
<path d="M701.5 362 L698.95 384.6" fill="none" stroke="#58cccc" stroke-width="0.8" />
<path d="M695.4 362 L697.95 384.6" fill="none" stroke="#58cccc" stroke-width="0.8" />
<line x1="701.5" y1="362" x2="695.4" y2="362" stroke="#58cccc" stroke-width="0.6" />
<path d="M679.6 360 L679.6 276.6 L674.4 276.6 L674.4 360" fill="none" stroke="#58cccc" stroke-width="0.9" />
<path d="M679.6 360 L677.5 384.6" fill="none" stroke="#58cccc" stroke-width="0.8" />
<path d="M674.4 360 L676.5 384.6" fill="none" stroke="#58cccc" stroke-width="0.8" />
<line x1="679.6" y1="360" x2="674.4" y2="360" stroke="#58cccc" stroke-width="0.6" />
<path d="M669.6 360 L669.6 286.4 L664.6 286.4 L664.6 360" fill="none" stroke="#58cccc" stroke-width="0.9" />
<path d="M669.6 360 L667.6 384.6" fill="none" stroke="#58cccc" stroke-width="0.8" />
<path d="M664.6 360 L666.6 384.6" fill="none" stroke="#58cccc" stroke-width="0.8" />
<line x1="669.6" y1="360" x2="664.6" y2="360" stroke="#58cccc" stroke-width="0.6" />
<path d="M659.4 360 L659.4 294.8 L655.8 294.8 L655.8 360" fill="none" stroke="#58cccc" stroke-width="0.9" />
<path d="M659.4 360 L658.1 384.6" fill="none" stroke="#58cccc" stroke-width="0.8" />
<path d="M655.8 360 L657.1 384.6" fill="none" stroke="#58cccc" stroke-width="0.8" />
<line x1="659.4" y1="360" x2="655.8" y2="360" stroke="#58cccc" stroke-width="0.6" />
<path d="M669.0 246.6 L669.0 200.8 L663.4 200.8 L663.4 246.6" fill="none" stroke="#58cccc" stroke-width="0.9" />
<path d="M669.0 246.6 L666.7 267.8" fill="none" stroke="#58cccc" stroke-width="0.8" />
<path d="M663.4 246.6 L665.7 267.8" fill="none" stroke="#58cccc" stroke-width="0.8" />
<line x1="669.0" y1="246.6" x2="663.4" y2="246.6" stroke="#58cccc" stroke-width="0.6" />
<path d="M644.7 248 L644.7 213.6 L640.0 213.6 L640.0 248" fill="none" stroke="#58cccc" stroke-width="0.9" />
<path d="M644.7 248 L642.85 267.8" fill="none" stroke="#58cccc" stroke-width="0.8" />
<path d="M640.0 248 L641.85 267.8" fill="none" stroke="#58cccc" stroke-width="0.8" />
<line x1="644.7" y1="248" x2="640.0" y2="248" stroke="#58cccc" stroke-width="0.6" />
<path d="M605.0 247.4 L605.0 231 L602.0 231 L602.0 247.4" fill="none" stroke="#58cccc" stroke-width="0.9" />
<path d="M605.0 247.4 L604.0 267.8" fill="none" stroke="#58cccc" stroke-width="0.8" />
<path d="M602.0 247.4 L603.0 267.8" fill="none" stroke="#58cccc" stroke-width="0.8" />
<line x1="605.0" y1="247.4" x2="602.0" y2="247.4" stroke="#58cccc" stroke-width="0.6" />
<path d="M577.2 250 L577.2 239.4 L575.0 239.4 L575.0 250" fill="none" stroke="#58cccc" stroke-width="0.9" />
<path d="M577.2 250 L576.6 267.8" fill="none" stroke="#58cccc" stroke-width="0.8" />
<path d="M575.0 250 L575.6 267.8" fill="none" stroke="#58cccc" stroke-width="0.8" />
<line x1="577.2" y1="250" x2="575.0" y2="250" stroke="#58cccc" stroke-width="0.6" />
<path d="M566.2 250 L566.2 241.4 L564.0 241.4 L564.0 250" fill="none" stroke="#58cccc" stroke-width="0.9" />
<path d="M566.2 250 L565.6 267.8" fill="none" stroke="#58cccc" stroke-width="0.8" />
<path d="M564.0 250 L564.6 267.8" fill="none" stroke="#58cccc" stroke-width="0.8" />
<line x1="566.2" y1="250" x2="564.0" y2="250" stroke="#58cccc" stroke-width="0.6" />
<rect x="476.6" y="277.4" width="12.6" height="91" fill="#041a52" stroke="none" stroke-width="1" />
<rect x="489.2" y="277.4" width="64.8" height="105" fill="#041a52" stroke="none" stroke-width="1" />
<rect x="558" y="277.4" width="64.8" height="105" fill="#041a52" stroke="none" stroke-width="1" />
<rect x="622.8" y="277.4" width="12.6" height="91" fill="#041a52" stroke="none" stroke-width="1" />
<rect x="448.2" y="277.4" width="41" height="91" fill="url(#stripe)" stroke="none" stroke-width="1" />
<rect x="489.2" y="277.4" width="64.8" height="105" fill="url(#stripe)" stroke="none" stroke-width="1" />
<rect x="558.1" y="277.4" width="64.7" height="105" fill="url(#stripeR)" stroke="none" stroke-width="1" />
<rect x="622.8" y="277.4" width="41.2" height="91" fill="url(#stripeR)" stroke="none" stroke-width="1" />
<line x1="474.5" y1="277.4" x2="474.5" y2="383.4" stroke="#8a9098" stroke-width="1" />
<line x1="484.3" y1="277.4" x2="484.3" y2="383.4" stroke="#8a9098" stroke-width="1" />
<line x1="627.3" y1="277.4" x2="627.3" y2="383.4" stroke="#8a9098" stroke-width="1" />
<line x1="637.6" y1="277.4" x2="637.6" y2="383.4" stroke="#8a9098" stroke-width="1" />
<rect x="439.2" y="268.8" width="233.6" height="8.2" fill="#041404" stroke="#1fd01f" stroke-width="1" />
<line x1="439.2" y1="273.6" x2="672.8" y2="273.6" stroke="#1fd01f" stroke-width="0.8" />
<line x1="556" y1="268.8" x2="556" y2="277" stroke="#1fd01f" stroke-width="0.8" />
<line x1="438.8" y1="261" x2="673.2" y2="261" stroke="#0a8ccc" stroke-width="1" />
<line x1="438.8" y1="259" x2="438.8" y2="277" stroke="#0a8ccc" stroke-width="0.8" />
<line x1="673.2" y1="259" x2="673.2" y2="277" stroke="#0a8ccc" stroke-width="0.8" />
<line x1="556" y1="259" x2="556" y2="269" stroke="#0a8ccc" stroke-width="0.8" />
<line x1="404" y1="371.4" x2="708.4" y2="371.4" stroke="#a87410" stroke-width="2" />
<rect x="484.5" y="383.3" width="143" height="2.2" fill="none" stroke="#1fd01f" stroke-width="0.8" />
<line x1="488.8" y1="390.7" x2="623.2" y2="390.7" stroke="#0a8ccc" stroke-width="0.9" />
<line x1="445.5" y1="357.5" x2="489.2" y2="357.5" stroke="#0a8ccc" stroke-width="0.9" />
<line x1="445.5" y1="364" x2="475" y2="364" stroke="#0a8ccc" stroke-width="0.9" />
<line x1="445.5" y1="356" x2="445.5" y2="372" stroke="#0a8ccc" stroke-width="0.7" />
<line x1="489.2" y1="356" x2="489.2" y2="372" stroke="#0a8ccc" stroke-width="0.7" />
<line x1="475" y1="362" x2="475" y2="372" stroke="#0a8ccc" stroke-width="0.7" />
<rect x="446.7" y="370.6" width="37.8" height="2.6" fill="none" stroke="#1fd01f" stroke-width="0.9" />
<path d="M446.6 374.4 Q449.6 377.6 452.6 374.4" fill="none" stroke="#2a66d8" stroke-width="1.3" />
<path d="M454.8 374.4 Q457.8 377.6 460.8 374.4" fill="none" stroke="#2a66d8" stroke-width="1.3" />
<path d="M463.0 374.4 Q466.0 377.6 469.0 374.4" fill="none" stroke="#2a66d8" stroke-width="1.3" />
<path d="M471.20000000000005 374.4 Q474.20000000000005 377.6 477.20000000000005 374.4" fill="none" stroke="#2a66d8" stroke-width="1.3" />
<path d="M479.40000000000003 374.4 Q482.40000000000003 377.6 485.40000000000003 374.4" fill="none" stroke="#2a66d8" stroke-width="1.3" />
<path d="M412.4 383.4 Q416.0 380 419.59999999999997 383.4" fill="none" stroke="#2a66d8" stroke-width="1.3" />
<path d="M422.79999999999995 383.4 Q426.4 380 429.99999999999994 383.4" fill="none" stroke="#2a66d8" stroke-width="1.3" />
<path d="M433.2 383.4 Q436.8 380 440.4 383.4" fill="none" stroke="#2a66d8" stroke-width="1.3" />
<path d="M443.59999999999997 383.4 Q447.2 380 450.79999999999995 383.4" fill="none" stroke="#2a66d8" stroke-width="1.3" />
<path d="M454.0 383.4 Q457.6 380 461.2 383.4" fill="none" stroke="#2a66d8" stroke-width="1.3" />
<path d="M464.4 383.4 Q468.0 380 471.59999999999997 383.4" fill="none" stroke="#2a66d8" stroke-width="1.3" />
<line x1="470.8" y1="368" x2="470.8" y2="391.6" stroke="#c8d0c0" stroke-width="0.8" />
<line x1="474.2" y1="368" x2="474.2" y2="391.6" stroke="#c8d0c0" stroke-width="0.8" />
<line x1="483.7" y1="372" x2="483.7" y2="392" stroke="#3a5a7a" stroke-width="0.8" />
<line x1="666.5" y1="357.5" x2="622.8" y2="357.5" stroke="#0a8ccc" stroke-width="0.9" />
<line x1="666.5" y1="364" x2="637.0" y2="364" stroke="#0a8ccc" stroke-width="0.9" />
<line x1="666.5" y1="356" x2="666.5" y2="372" stroke="#0a8ccc" stroke-width="0.7" />
<line x1="622.8" y1="356" x2="622.8" y2="372" stroke="#0a8ccc" stroke-width="0.7" />
<line x1="637.0" y1="362" x2="637.0" y2="372" stroke="#0a8ccc" stroke-width="0.7" />
<rect x="627.5" y="370.6" width="37.8" height="2.6" fill="none" stroke="#1fd01f" stroke-width="0.9" />
<path d="M665.4 374.4 Q662.4 377.6 659.4 374.4" fill="none" stroke="#2a66d8" stroke-width="1.3" />
<path d="M657.2 374.4 Q654.2 377.6 651.2 374.4" fill="none" stroke="#2a66d8" stroke-width="1.3" />
<path d="M649.0 374.4 Q646.0 377.6 643.0 374.4" fill="none" stroke="#2a66d8" stroke-width="1.3" />
<path d="M640.8 374.4 Q637.8 377.6 634.8 374.4" fill="none" stroke="#2a66d8" stroke-width="1.3" />
<path d="M632.6 374.4 Q629.6 377.6 626.6 374.4" fill="none" stroke="#2a66d8" stroke-width="1.3" />
<path d="M699.6 383.4 Q696.0 380 692.4 383.4" fill="none" stroke="#2a66d8" stroke-width="1.3" />
<path d="M689.2 383.4 Q685.6 380 682.0 383.4" fill="none" stroke="#2a66d8" stroke-width="1.3" />
<path d="M678.8 383.4 Q675.2 380 671.6 383.4" fill="none" stroke="#2a66d8" stroke-width="1.3" />
<path d="M668.4 383.4 Q664.8 380 661.2 383.4" fill="none" stroke="#2a66d8" stroke-width="1.3" />
<path d="M658.0 383.4 Q654.4 380 650.8 383.4" fill="none" stroke="#2a66d8" stroke-width="1.3" />
<path d="M647.6 383.4 Q644.0 380 640.4 383.4" fill="none" stroke="#2a66d8" stroke-width="1.3" />
<line x1="641.2" y1="368" x2="641.2" y2="391.6" stroke="#c8d0c0" stroke-width="0.8" />
<line x1="637.8" y1="368" x2="637.8" y2="391.6" stroke="#c8d0c0" stroke-width="0.8" />
<line x1="628.3" y1="372" x2="628.3" y2="392" stroke="#3a5a7a" stroke-width="0.8" />
<line x1="678.4" y1="268.8" x2="678.4" y2="384" stroke="#0a8ccc" stroke-width="0.9" />
<line x1="686.6" y1="268.8" x2="686.6" y2="384" stroke="#0a8ccc" stroke-width="0.9" />
<line x1="673" y1="268.8" x2="688" y2="268.8" stroke="#0a8ccc" stroke-width="0.7" />
<line x1="673" y1="277" x2="680" y2="277" stroke="#0a8ccc" stroke-width="0.7" />
<line x1="287" y1="386.2" x2="470.6" y2="386.2" stroke="#c00000" stroke-width="1" />
<line x1="641.6" y1="386.2" x2="824.8" y2="386.2" stroke="#c00000" stroke-width="1" />
<rect x="287" y="391" width="537.8" height="3" fill="#e00000" stroke="none" stroke-width="1" />
<line x1="287" y1="403.3" x2="824.8" y2="403.3" stroke="#d00000" stroke-width="1" />
<line x1="287" y1="386.2" x2="287" y2="416" stroke="#b00000" stroke-width="0.8" />
<line x1="627" y1="384" x2="627" y2="403" stroke="#a01818" stroke-width="0.9" />
<line x1="637.2" y1="384" x2="637.2" y2="403" stroke="#a01818" stroke-width="0.9" />
<line x1="260" y1="408.4" x2="850" y2="408.4" stroke="#0a8ccc" stroke-width="1" />
<line x1="392.6" y1="413.2" x2="640" y2="413.2" stroke="#0a8ccc" stroke-width="0.9" />
<line x1="287.6" y1="416.3" x2="392.4" y2="416.3" stroke="#1fd01f" stroke-width="0.9" />
<line x1="553.4" y1="416.4" x2="821.2" y2="416.4" stroke="#1fd01f" stroke-width="0.9" />
<path d="M820.6 416.4 L820.6 453 L692.5 485" fill="none" stroke="#18b060" stroke-width="1" />
<rect x="287.3" y="402.8" width="4.2" height="13.5" fill="#1a2a08" stroke="#c8d848" stroke-width="0.8" />
<rect x="820.7" y="403.3" width="4.4" height="12.4" fill="#1a2a08" stroke="#c8d848" stroke-width="0.8" />
<rect x="821.2" y="382.4" width="12.3" height="4.2" fill="none" stroke="#b8820c" stroke-width="1" />
<path d="M392.6 415.6 L429.3 415.6 L429.3 483.4 L516.2 483.4 L516.2 415.6 L552.4 415.6 L552.4 514.6 L488 514.6 L488 568 L451.6 568 L451.6 514.6 L392.6 514.6 Z" fill="#6e93d4" stroke="none" stroke-width="0" />
<rect x="302" y="417" width="46" height="19" fill="none" stroke="#2a66d8" stroke-width="0.9" />
<line x1="302" y1="422.6" x2="348" y2="422.6" stroke="#2a66d8" stroke-width="0.8" />
<rect x="312.3" y="423.4" width="5.2" height="6.3" fill="none" stroke="#2a66d8" stroke-width="0.9" />
<rect x="333.2" y="423.4" width="5.6" height="6.3" fill="none" stroke="#2a66d8" stroke-width="0.9" />
<rect x="321" y="400.4" width="12.7" height="14.3" fill="none" stroke="#0a8ccc" stroke-width="0.9" />
<line x1="287" y1="435.8" x2="348" y2="435.8" stroke="#0a8ccc" stroke-width="0.9" />
<line x1="287" y1="416" x2="287" y2="437" stroke="#0a8ccc" stroke-width="0.7" />
<path d="M333.4 415.6 L395.5 478.8" fill="none" stroke="#c030c8" stroke-width="1.2" />
<path d="M320.8 415.6 L390.8 487.8 L395.5 478.8" fill="none" stroke="#c030c8" stroke-width="1.2" />
<line x1="395.5" y1="479" x2="429.3" y2="479" stroke="#b060d8" stroke-width="1" />
<line x1="390.8" y1="487.9" x2="429.3" y2="487.9" stroke="#b060d8" stroke-width="1" />
<line x1="365.4" y1="411" x2="365.4" y2="568" stroke="#0a8ccc" stroke-width="0.9" />
<line x1="380.5" y1="479.4" x2="380.5" y2="568" stroke="#0a8ccc" stroke-width="0.9" />
<line x1="260" y1="509.8" x2="393" y2="509.8" stroke="#0a8ccc" stroke-width="1" />
<line x1="365" y1="515.5" x2="552" y2="515.5" stroke="#0a8ccc" stroke-width="0.9" />
<path d="M291.2 416.3 L291.2 453.2 L344 459.4 L393 459.4" fill="none" stroke="#28b058" stroke-width="0.9" />
<path d="M385.4 479.4 L385.4 502 Q386 507 393 507.4" fill="none" stroke="#28b058" stroke-width="0.9" />
<line x1="380.5" y1="479.4" x2="393" y2="479.4" stroke="#0a8ccc" stroke-width="0.8" />
<line x1="273.2" y1="386" x2="273.2" y2="499.4" stroke="#d8e0e0" stroke-width="0.8" />
<path d="M273 499.4 L284.4 499.4" fill="none" stroke="#e4e4e4" stroke-width="0.8" />
<path d="M273.4 499.4 L277.6 524.2" fill="none" stroke="#b8e0e0" stroke-width="0.8" />
<path d="M284.2 499.4 L280.4 524.2" fill="none" stroke="#b8e0e0" stroke-width="0.8" />
<rect x="277" y="497" width="4" height="1.5" fill="#e8e84a" stroke="none" stroke-width="1" />
<rect x="273.3" y="526.5" width="11.1" height="4.7" fill="none" stroke="#0a8ccc" stroke-width="0.8" />
<rect x="277.4" y="524.6" width="1.2" height="2.6" fill="#e8e84a" stroke="none" stroke-width="1" />
<rect x="279.6" y="524.6" width="1.2" height="2.6" fill="#e8e84a" stroke="none" stroke-width="1" />
<line x1="267.8" y1="526.5" x2="284.4" y2="526.5" stroke="#0a8ccc" stroke-width="0.8" />
<line x1="267.8" y1="531.2" x2="284.4" y2="531.2" stroke="#0a8ccc" stroke-width="0.8" />
<path d="M827.4 529.6 L839.8 529.6" fill="none" stroke="#e4e4e4" stroke-width="0.8" />
<path d="M827.6 529.6 L827.6 538 L833 563" fill="none" stroke="#b8e0e0" stroke-width="0.8" />
<path d="M839.6 529.6 L839.6 538 L834.2 563" fill="none" stroke="#b8e0e0" stroke-width="0.8" />
<line x1="827.6" y1="538" x2="839.6" y2="538" stroke="#b8e0e0" stroke-width="0.6" />
<rect x="831" y="527" width="4.8" height="1.4" fill="#e8e84a" stroke="none" stroke-width="1" />
<rect x="285.2" y="536.4" width="211.6" height="3.4" fill="url(#dotF)" stroke="none" stroke-width="1" />
<line x1="285.2" y1="539.8" x2="496.8" y2="539.8" stroke="#d8e0a0" stroke-width="0.7" />
<rect x="451.6" y="540.2" width="36.6" height="5.8" fill="#000" stroke="none" stroke-width="1" />
<line x1="452.3" y1="546" x2="492" y2="546" stroke="#d8d8d8" stroke-width="0.7" />
<line x1="260" y1="537.4" x2="285" y2="537.4" stroke="#0a8ccc" stroke-width="0.9" />
<line x1="261.6" y1="548.9" x2="451" y2="548.9" stroke="#0a8ccc" stroke-width="0.9" />
<line x1="275.6" y1="552.4" x2="451" y2="552.4" stroke="#1a62c8" stroke-width="0.9" />
<rect x="408.6" y="421" width="8" height="86.3" fill="none" stroke="#48c848" stroke-width="0.9" />
<line x1="393" y1="459.4" x2="429" y2="459.4" stroke="#3aa868" stroke-width="0.7" />
<line x1="385.4" y1="459.4" x2="385.4" y2="479" stroke="#28b058" stroke-width="0.8" />
<line x1="401" y1="509" x2="413.7" y2="493.4" stroke="#3a70e0" stroke-width="0.8" />
<line x1="431.4" y1="416.9" x2="474.6" y2="416.9" stroke="#d828d8" stroke-width="1.3" />
<rect x="431.4" y="417.6" width="43.2" height="2.2" fill="#28b028" stroke="none" stroke-width="1" />
<path d="M439.4 421.3 L442.79999999999995 421.3 L443.79999999999995 428.7 L458.70000000000005 428.7 L459.70000000000005 421.3 L463.1 421.3" fill="none" stroke="#d828d8" stroke-width="1.1" />
<path d="M440.4 428.3 L442.4 430.7 L460.1 430.7 L462.1 428.3" fill="none" stroke="#d828d8" stroke-width="1" />
<line x1="437.0" y1="424.90000000000003" x2="442.79999999999995" y2="424.90000000000003" stroke="#d828d8" stroke-width="1" />
<line x1="459.70000000000005" y1="424.90000000000003" x2="465.5" y2="424.90000000000003" stroke="#d828d8" stroke-width="1" />
<line x1="444.0" y1="426.4" x2="458.1" y2="426.4" stroke="#f4f4f4" stroke-width="1.3" />
<path d="M449.25 430.7 q2 3 4 0 q2 3 4 0" fill="none" stroke="#d828d8" stroke-width="0.9" />
<path d="M439.4 464 L442.79999999999995 464 L443.79999999999995 470.2 L458.70000000000005 470.2 L459.70000000000005 464 L463.1 464" fill="none" stroke="#d828d8" stroke-width="1.1" />
<path d="M440.4 469.8 L442.4 472.2 L460.1 472.2 L462.1 469.8" fill="none" stroke="#d828d8" stroke-width="1" />
<line x1="437.0" y1="467.6" x2="442.79999999999995" y2="467.6" stroke="#d828d8" stroke-width="1" />
<line x1="459.70000000000005" y1="467.6" x2="465.5" y2="467.6" stroke="#d828d8" stroke-width="1" />
<line x1="444.0" y1="468.5" x2="458.1" y2="468.5" stroke="#f4f4f4" stroke-width="1.3" />
<path d="M449.25 472.2 q2 3 4 0 q2 3 4 0" fill="none" stroke="#d828d8" stroke-width="0.9" />
<path d="M447 464 q2 -2.6 4 0 q2 -2.6 4 0 q2 -2.6 4 0" fill="none" stroke="#d828d8" stroke-width="0.8" />
<rect x="477.2" y="393.6" width="4.4" height="84" fill="#9c2aa4" stroke="none" stroke-width="1" />
<line x1="477.3" y1="393.6" x2="477.3" y2="477.6" stroke="#d828d8" stroke-width="0.9" />
<line x1="481.5" y1="393.6" x2="481.5" y2="477.6" stroke="#d828d8" stroke-width="0.9" />
<rect x="503.1" y="416.7" width="4.9" height="61" fill="#9c2aa4" stroke="none" stroke-width="1" />
<line x1="503.2" y1="416.7" x2="503.2" y2="477.6" stroke="#d828d8" stroke-width="0.9" />
<line x1="507.9" y1="416.7" x2="507.9" y2="477.6" stroke="#d828d8" stroke-width="0.9" />
<line x1="481.6" y1="421.5" x2="494" y2="421.5" stroke="#d828d8" stroke-width="1.2" />
<line x1="481.6" y1="429" x2="494" y2="429" stroke="#d828d8" stroke-width="1.2" />
<line x1="481.6" y1="436.6" x2="494" y2="436.6" stroke="#d828d8" stroke-width="1.2" />
<line x1="481.6" y1="443.1" x2="494" y2="443.1" stroke="#d828d8" stroke-width="1.2" />
<line x1="481.6" y1="450.5" x2="494" y2="450.5" stroke="#d828d8" stroke-width="1.2" />
<line x1="481.6" y1="460.7" x2="500" y2="460.7" stroke="#d828d8" stroke-width="1.2" />
<line x1="481.6" y1="467.8" x2="496" y2="467.8" stroke="#d828d8" stroke-width="1.2" />
<line x1="481.6" y1="474.8" x2="494" y2="474.8" stroke="#d828d8" stroke-width="1.2" />
<line x1="481.6" y1="425.9" x2="488.6" y2="425.9" stroke="#d828d8" stroke-width="1.1" />
<rect x="488.2" y="424.7" width="2.4" height="2.4" fill="#f4b0f4" stroke="none" stroke-width="1" />
<line x1="481.6" y1="432.6" x2="488.6" y2="432.6" stroke="#d828d8" stroke-width="1.1" />
<rect x="488.2" y="431.40000000000003" width="2.4" height="2.4" fill="#f4b0f4" stroke="none" stroke-width="1" />
<line x1="481.6" y1="446.7" x2="488.6" y2="446.7" stroke="#d828d8" stroke-width="1.1" />
<rect x="488.2" y="445.5" width="2.4" height="2.4" fill="#f4b0f4" stroke="none" stroke-width="1" />
<line x1="481.6" y1="464.3" x2="488.6" y2="464.3" stroke="#d828d8" stroke-width="1.1" />
<rect x="488.2" y="463.1" width="2.4" height="2.4" fill="#f4b0f4" stroke="none" stroke-width="1" />
<line x1="481.6" y1="471.3" x2="488.6" y2="471.3" stroke="#d828d8" stroke-width="1.1" />
<rect x="488.2" y="470.1" width="2.4" height="2.4" fill="#f4b0f4" stroke="none" stroke-width="1" />
<line x1="463" y1="426" x2="477.2" y2="426" stroke="#d828d8" stroke-width="0.9" />
<line x1="506.3" y1="422" x2="536" y2="422" stroke="#c848d0" stroke-width="0.9" />
<line x1="393" y1="459.9" x2="477.2" y2="459.9" stroke="#28a868" stroke-width="0.8" />
<line x1="494.1" y1="416" x2="494.1" y2="568" stroke="#38c838" stroke-width="0.9" />
<line x1="501.3" y1="416" x2="501.3" y2="568" stroke="#38c838" stroke-width="0.9" />
<rect x="431.4" y="478.9" width="82.8" height="3.9" fill="#c828c8" stroke="none" stroke-width="1" />
<rect x="431.4" y="476" width="34" height="2.9" fill="#28b028" stroke="none" stroke-width="1" />
<rect x="472" y="473" width="3.5" height="6" fill="#28a828" stroke="none" stroke-width="1" />
<rect x="509.8" y="473" width="3.5" height="6" fill="#28a828" stroke="none" stroke-width="1" />
<rect x="467.6" y="475" width="2.2" height="4" fill="#28a828" stroke="none" stroke-width="1" />
<rect x="484" y="475" width="2.2" height="4" fill="#28a828" stroke="none" stroke-width="1" />
<rect x="488" y="475" width="2.2" height="4" fill="#28a828" stroke="none" stroke-width="1" />
<rect x="499" y="475" width="2.2" height="4" fill="#28a828" stroke="none" stroke-width="1" />
<line x1="420" y1="487.6" x2="516.8" y2="487.6" stroke="#c040d0" stroke-width="0.9" />
<line x1="430.7" y1="439.4" x2="510.8" y2="439.4" stroke="#0a8ccc" stroke-width="0.9" />
<line x1="426.8" y1="456.8" x2="517" y2="456.8" stroke="#0a8ccc" stroke-width="0.9" />
<line x1="431" y1="493.6" x2="516" y2="493.6" stroke="#0a8ccc" stroke-width="0.9" />
<line x1="430.7" y1="416" x2="430.7" y2="440.6" stroke="#0a8ccc" stroke-width="0.7" />
<line x1="474.3" y1="386" x2="474.3" y2="440.6" stroke="#0a8ccc" stroke-width="0.8" />
<line x1="483.8" y1="376" x2="483.8" y2="418" stroke="#0a8ccc" stroke-width="0.8" />
<line x1="506.8" y1="399" x2="506.8" y2="420" stroke="#0a8ccc" stroke-width="0.8" />
<line x1="483.8" y1="399" x2="506.8" y2="399" stroke="#0a8ccc" stroke-width="0.8" />
<line x1="392.6" y1="509.8" x2="552.4" y2="509.8" stroke="#2a8ad8" stroke-width="0.9" />
<line x1="471" y1="403.3" x2="471" y2="416" stroke="#b8d848" stroke-width="0.9" />
<line x1="474.5" y1="403.3" x2="474.5" y2="416" stroke="#b8d848" stroke-width="0.9" />
<line x1="484.6" y1="403.3" x2="484.6" y2="416" stroke="#b8d848" stroke-width="0.9" />
<line x1="488" y1="403.3" x2="488" y2="416" stroke="#b8d848" stroke-width="0.9" />
<line x1="468.8" y1="391.6" x2="488.6" y2="391.6" stroke="#f0f0f0" stroke-width="1.4" />
<line x1="485.4" y1="383.2" x2="485.4" y2="392" stroke="#0a8ccc" stroke-width="0.8" />
<line x1="468.8" y1="384" x2="468.8" y2="392" stroke="#0a8ccc" stroke-width="0.7" />
<line x1="390.7" y1="411" x2="390.7" y2="480" stroke="#0a8ccc" stroke-width="0.7" />
<line x1="428" y1="408" x2="428" y2="462" stroke="#0a8ccc" stroke-width="0.7" />
<line x1="517.6" y1="408" x2="517.6" y2="462" stroke="#0a8ccc" stroke-width="0.7" />
<rect x="552.6" y="416.4" width="7.2" height="105.4" fill="none" stroke="#38c838" stroke-width="0.9" />
<line x1="610.5" y1="416.4" x2="610.5" y2="521" stroke="#38c838" stroke-width="0.9" />
<line x1="613.8" y1="416.4" x2="613.8" y2="521" stroke="#38c838" stroke-width="0.9" />
<line x1="536" y1="422" x2="615" y2="422" stroke="#c030c8" stroke-width="1" />
<rect x="632" y="418" width="3.9" height="150" fill="#a828b0" stroke="none" stroke-width="1" />
<line x1="632" y1="418" x2="632" y2="568" stroke="#d828d8" stroke-width="0.8" />
<line x1="635.9" y1="418" x2="635.9" y2="568" stroke="#d828d8" stroke-width="0.8" />
<line x1="615.2" y1="422" x2="632" y2="422" stroke="#d828d8" stroke-width="1.3" />
<circle cx="615.4" cy="422" r="1.2" fill="#f080f0" stroke="none" stroke-width="0"/>
<line x1="615.2" y1="429" x2="632" y2="429" stroke="#d828d8" stroke-width="1.3" />
<circle cx="615.4" cy="429" r="1.2" fill="#f080f0" stroke="none" stroke-width="0"/>
<line x1="615.2" y1="436.2" x2="632" y2="436.2" stroke="#d828d8" stroke-width="1.3" />
<circle cx="615.4" cy="436.2" r="1.2" fill="#f080f0" stroke="none" stroke-width="0"/>
<line x1="615.2" y1="443.3" x2="632" y2="443.3" stroke="#d828d8" stroke-width="1.3" />
<circle cx="615.4" cy="443.3" r="1.2" fill="#f080f0" stroke="none" stroke-width="0"/>
<line x1="615.2" y1="450.5" x2="632" y2="450.5" stroke="#d828d8" stroke-width="1.3" />
<circle cx="615.4" cy="450.5" r="1.2" fill="#f080f0" stroke="none" stroke-width="0"/>
<line x1="615.2" y1="461" x2="632" y2="461" stroke="#d828d8" stroke-width="1.3" />
<circle cx="615.4" cy="461" r="1.2" fill="#f080f0" stroke="none" stroke-width="0"/>
<line x1="615.2" y1="468" x2="632" y2="468" stroke="#d828d8" stroke-width="1.3" />
<circle cx="615.4" cy="468" r="1.2" fill="#f080f0" stroke="none" stroke-width="0"/>
<line x1="615.2" y1="475" x2="632" y2="475" stroke="#d828d8" stroke-width="1.3" />
<circle cx="615.4" cy="475" r="1.2" fill="#f080f0" stroke="none" stroke-width="0"/>
<rect x="621.4" y="424.9" width="2.2" height="2.2" fill="#f0a0f0" stroke="none" stroke-width="1" />
<rect x="621.4" y="431.59999999999997" width="2.2" height="2.2" fill="#f0a0f0" stroke="none" stroke-width="1" />
<rect x="621.4" y="438.7" width="2.2" height="2.2" fill="#f0a0f0" stroke="none" stroke-width="1" />
<rect x="621.4" y="445.7" width="2.2" height="2.2" fill="#f0a0f0" stroke="none" stroke-width="1" />
<rect x="621.4" y="452.9" width="2.2" height="2.2" fill="#f0a0f0" stroke="none" stroke-width="1" />
<rect x="636.6" y="417.2" width="4.7" height="12.7" fill="#143a10" stroke="#38c838" stroke-width="0.9" />
<line x1="635.9" y1="448.9" x2="661" y2="448.9" stroke="#d828d8" stroke-width="1" />
<path d="M648 448.9 Q652 441 658.6 438.6" fill="none" stroke="#d828d8" stroke-width="0.9" />
<line x1="651" y1="444.6" x2="658.6" y2="444.6" stroke="#d828d8" stroke-width="0.8" />
<line x1="635.9" y1="454.4" x2="659.6" y2="454.4" stroke="#d828d8" stroke-width="1" />
<line x1="635.9" y1="462.4" x2="659.6" y2="462.4" stroke="#d828d8" stroke-width="1" />
<line x1="636" y1="458.4" x2="645" y2="458.4" stroke="#d828d8" stroke-width="0.9" />
<path d="M643.4 456.79999999999995 L645 458.4 L643.4 460.0" fill="none" stroke="#d828d8" stroke-width="0.8" />
<line x1="636" y1="466.6" x2="645" y2="466.6" stroke="#d828d8" stroke-width="0.9" />
<path d="M643.4 465.0 L645 466.6 L643.4 468.20000000000005" fill="none" stroke="#d828d8" stroke-width="0.8" />
<line x1="636" y1="471.4" x2="647" y2="471.4" stroke="#d828d8" stroke-width="0.9" />
<path d="M645.4 469.79999999999995 L647 471.4 L645.4 473.0" fill="none" stroke="#d828d8" stroke-width="0.8" />
<path d="M638 481.6 L642 481.6" fill="none" stroke="#f0c0f0" stroke-width="1" />
<line x1="640" y1="478.6" x2="640" y2="481.6" stroke="#f0c0f0" stroke-width="0.8" />
<line x1="626.3" y1="383.2" x2="626.3" y2="392" stroke="#0a8ccc" stroke-width="0.7" />
<line x1="642" y1="386" x2="642" y2="410" stroke="#0a8ccc" stroke-width="0.7" />
<line x1="632" y1="399" x2="648" y2="399" stroke="#0a8ccc" stroke-width="0.7" />
<line x1="626.3" y1="411.8" x2="644" y2="411.8" stroke="#0a8ccc" stroke-width="0.8" />
<line x1="626.3" y1="411.8" x2="626.3" y2="420" stroke="#0a8ccc" stroke-width="0.7" />
<line x1="631" y1="410" x2="631" y2="418" stroke="#0a8ccc" stroke-width="0.7" />
<line x1="638" y1="410" x2="638" y2="418" stroke="#0a8ccc" stroke-width="0.7" />
<line x1="644" y1="410" x2="644" y2="416" stroke="#0a8ccc" stroke-width="0.7" />
<line x1="647.5" y1="415.6" x2="647.5" y2="428.6" stroke="#0a8ccc" stroke-width="0.7" />
<line x1="642" y1="428.6" x2="650" y2="428.6" stroke="#0a8ccc" stroke-width="0.7" />
<rect x="676.2" y="421" width="8.6" height="86.2" fill="none" stroke="#38c838" stroke-width="0.9" />
<path d="M667.1 451.9 L667.1 489 L691.5 489" fill="none" stroke="#a8b0b8" stroke-width="0.8" />
<line x1="667.1" y1="451.9" x2="691.5" y2="451.9" stroke="#a8b0b8" stroke-width="0.8" />
<line x1="659.7" y1="434.6" x2="659.7" y2="568" stroke="#0a8ccc" stroke-width="0.9" />
<line x1="662.2" y1="440" x2="662.2" y2="568" stroke="#2a6ad8" stroke-width="0.8" />
<line x1="659.3" y1="434.3" x2="740.4" y2="434.3" stroke="#0a8ccc" stroke-width="0.8" />
<line x1="659.7" y1="437.2" x2="676" y2="437.2" stroke="#0a8ccc" stroke-width="0.7" />
<line x1="659.7" y1="452.6" x2="676" y2="452.6" stroke="#0a8ccc" stroke-width="0.7" />
<line x1="659.7" y1="456.4" x2="676" y2="456.4" stroke="#0a8ccc" stroke-width="0.7" />
<path d="M552.6 469.3 L630 482.7 L638.8 485 L692.5 485" fill="none" stroke="#18b060" stroke-width="1" />
<path d="M628.5 522.7 L630.6 517.9 L655.4 517.9 L692.5 508" fill="none" stroke="#18b060" stroke-width="1" />
<line x1="552" y1="521.8" x2="628.5" y2="522.7" stroke="#38c838" stroke-width="0.9" />
<rect x="695" y="416.5" width="46" height="16.7" fill="none" stroke="#2a66d8" stroke-width="0.9" />
<line x1="695" y1="422.7" x2="741" y2="422.7" stroke="#2a66d8" stroke-width="0.8" />
<rect x="705" y="423.2" width="5" height="6.3" fill="none" stroke="#2a66d8" stroke-width="0.9" />
<rect x="726" y="423.2" width="5" height="6.3" fill="none" stroke="#2a66d8" stroke-width="0.9" />
<line x1="690" y1="433.2" x2="825.6" y2="433.2" stroke="#0a8ccc" stroke-width="0.9" />
<line x1="744.6" y1="398.9" x2="825.6" y2="398.9" stroke="#0a8ccc" stroke-width="0.9" />
<line x1="744.6" y1="396.6" x2="744.6" y2="407" stroke="#0a8ccc" stroke-width="0.7" />
<line x1="754.3" y1="396.6" x2="754.3" y2="407" stroke="#0a8ccc" stroke-width="0.7" />
<line x1="806.2" y1="396.6" x2="806.2" y2="407" stroke="#0a8ccc" stroke-width="0.7" />
<line x1="816" y1="396.6" x2="816" y2="407" stroke="#0a8ccc" stroke-width="0.7" />
<line x1="825.6" y1="396.6" x2="825.6" y2="407" stroke="#0a8ccc" stroke-width="0.7" />
<line x1="720.3" y1="386" x2="720.3" y2="568" stroke="#0a8ccc" stroke-width="0.9" />
<line x1="762.2" y1="406" x2="762.2" y2="568" stroke="#0a8ccc" stroke-width="0.9" />
<line x1="746" y1="406.3" x2="746" y2="568" stroke="#d8d8d8" stroke-width="0.9" />
<line x1="754.3" y1="406.3" x2="754.3" y2="568" stroke="#d8d8d8" stroke-width="0.9" />
<line x1="806.2" y1="406.3" x2="806.2" y2="568" stroke="#d8d8d8" stroke-width="0.9" />
<line x1="816" y1="406.3" x2="816" y2="568" stroke="#d8d8d8" stroke-width="0.9" />
<line x1="746" y1="406.3" x2="754.3" y2="406.3" stroke="#d8d8d8" stroke-width="0.9" />
<line x1="806.2" y1="406.3" x2="816" y2="406.3" stroke="#d8d8d8" stroke-width="0.9" />
<line x1="754.3" y1="434.2" x2="816" y2="434.2" stroke="#e8e8e8" stroke-width="1" />
<line x1="754.3" y1="443.8" x2="806.2" y2="443.8" stroke="#9a9a9a" stroke-width="1" />
<line x1="754.3" y1="514.7" x2="806.2" y2="514.7" stroke="#e8e8e8" stroke-width="1" />
<line x1="746" y1="524.4" x2="816" y2="524.4" stroke="#c8a0d8" stroke-width="1" />
<line x1="737.4" y1="433.2" x2="737.4" y2="568" stroke="#2a66d8" stroke-width="0.9" />
<line x1="741" y1="433.2" x2="741" y2="568" stroke="#2a66d8" stroke-width="0.9" />
<line x1="659.4" y1="529.1" x2="740.6" y2="529.1" stroke="#2a66d8" stroke-width="0.9" />
<line x1="659.4" y1="532.5" x2="740.6" y2="532.5" stroke="#2a66d8" stroke-width="0.9" />
<line x1="662.5" y1="551.3" x2="737.5" y2="551.3" stroke="#3a6ab8" stroke-width="0.9" />
<line x1="662.5" y1="554.4" x2="737.5" y2="554.4" stroke="#3a6ab8" stroke-width="0.9" />
<line x1="675.3" y1="489" x2="675.3" y2="568" stroke="#0a8ccc" stroke-width="0.8" />
<line x1="662.5" y1="566" x2="690.6" y2="566" stroke="#2a66d8" stroke-width="0.8" />
<rect x="691.5" y="443.3" width="18.5" height="84.4" fill="none" stroke="#b0b8c0" stroke-width="0.9" />
<rect x="688.6" y="527" width="23.4" height="3" fill="none" stroke="#8aa0c8" stroke-width="0.8" />
<rect x="713.6" y="459" width="13" height="18" fill="none" stroke="#68a8ec" stroke-width="1" rx="1.6"/>
<rect x="716" y="453.4" width="8" height="5.6" fill="none" stroke="#68a8ec" stroke-width="0.9" />
<line x1="713.6" y1="464" x2="726.6" y2="464" stroke="#68a8ec" stroke-width="0.8" />
<line x1="713.6" y1="472" x2="726.6" y2="472" stroke="#68a8ec" stroke-width="0.8" />
<path d="M726.6 459.6 L731 459.6 Q732.6 459.8 732.6 462 L732.6 472 Q732.4 474 730.6 474 L726.6 474" fill="none" stroke="#68a8ec" stroke-width="0.9" />
<path d="M711 456 L713.6 459 L713.6 477 L711 480" fill="none" stroke="#68a8ec" stroke-width="0.8" />
<path d="M688.6 496.4 L713 496.4 L724.7 499.3 L724.7 503.2 L720.8 503.2 L720.8 500.6 L713 499.3 L688.6 499.3 L688.6 496.4" fill="none" stroke="#88a8d8" stroke-width="0.9" />
<rect x="737.6" y="501.8" width="2" height="2.6" fill="#e04828" stroke="none" stroke-width="1" />
<line x1="659.3" y1="438.2" x2="740.4" y2="438.2" stroke="#2a66d8" stroke-width="0.8" />
<path d="M852.5 480.1 L973.8 480.1" fill="none" stroke="#d010a0" stroke-width="1" />
<path d="M852.5 484.4 L973.8 484.4" fill="none" stroke="#d010a0" stroke-width="1" />
<line x1="966.3" y1="480.1" x2="966.3" y2="568" stroke="#d010a0" stroke-width="1" />
<line x1="973.2" y1="480.1" x2="973.2" y2="568" stroke="#d010a0" stroke-width="1" />
<line x1="852.6" y1="480.1" x2="852.6" y2="484.4" stroke="#d010a0" stroke-width="0.8" />
<path d="M853 484.4 L853 545.9 L846.9 547.7" fill="none" stroke="#d010a0" stroke-width="1" />
<line x1="825.6" y1="564" x2="845" y2="564" stroke="#1fd01f" stroke-width="1" />
<line x1="822" y1="560" x2="822" y2="568" stroke="#0a8ccc" stroke-width="0.7" />
<line x1="820" y1="565.6" x2="866" y2="565.6" stroke="#0a8ccc" stroke-width="0.8" />
<rect x="509" y="536.4" width="95" height="3.4" fill="url(#dotF)" stroke="none" stroke-width="1" />
<line x1="509" y1="539.8" x2="604" y2="539.8" stroke="#d8e0a0" stroke-width="0.7" />
<rect x="616.2" y="536.4" width="10" height="3.1" fill="url(#dotF)" stroke="none" stroke-width="1" />
<line x1="496.7" y1="523.7" x2="615.3" y2="523.7" stroke="#30d030" stroke-width="0.9" />
<line x1="496.7" y1="527.2" x2="615" y2="527.2" stroke="#0a8ccc" stroke-width="0.8" />
<line x1="509.9" y1="543" x2="601.3" y2="543" stroke="#38e038" stroke-width="1.3" />
<rect x="597" y="541.4" width="4.3" height="3.2" fill="#2a3a10" stroke="#c8d878" stroke-width="0.6" />
<line x1="509.9" y1="547.5" x2="601.3" y2="547.5" stroke="#38e038" stroke-width="1.3" />
<rect x="597" y="545.9" width="4.3" height="3.2" fill="#2a3a10" stroke="#c8d878" stroke-width="0.6" />
<line x1="509.9" y1="552.2" x2="601.3" y2="552.2" stroke="#38e038" stroke-width="1.3" />
<rect x="597" y="550.6" width="4.3" height="3.2" fill="#2a3a10" stroke="#c8d878" stroke-width="0.6" />
<line x1="509.9" y1="556.6" x2="601.3" y2="556.6" stroke="#38e038" stroke-width="1.3" />
<rect x="597" y="555.0" width="4.3" height="3.2" fill="#2a3a10" stroke="#c8d878" stroke-width="0.6" />
<rect x="495.8" y="560.6" width="133.6" height="7.4" fill="url(#hatchO)" stroke="none" stroke-width="1" />
<line x1="495.8" y1="560.6" x2="629.4" y2="560.6" stroke="#d8b020" stroke-width="0.7" />
<rect x="498" y="558.4" width="1.3" height="3.4" fill="#e03818" stroke="none" stroke-width="1" />
<rect x="505" y="558.4" width="1.3" height="3.4" fill="#e03818" stroke="none" stroke-width="1" />
<rect x="512" y="558.4" width="1.3" height="3.4" fill="#e03818" stroke="none" stroke-width="1" />
<rect x="519" y="558.4" width="1.3" height="3.4" fill="#e03818" stroke="none" stroke-width="1" />
<rect x="526" y="558.4" width="1.3" height="3.4" fill="#e03818" stroke="none" stroke-width="1" />
<rect x="533" y="558.4" width="1.3" height="3.4" fill="#e03818" stroke="none" stroke-width="1" />
<rect x="540" y="558.4" width="1.3" height="3.4" fill="#e03818" stroke="none" stroke-width="1" />
<rect x="547" y="558.4" width="1.3" height="3.4" fill="#e03818" stroke="none" stroke-width="1" />
<rect x="554" y="558.4" width="1.3" height="3.4" fill="#e03818" stroke="none" stroke-width="1" />
<rect x="561" y="558.4" width="1.3" height="3.4" fill="#e03818" stroke="none" stroke-width="1" />
<rect x="568" y="558.4" width="1.3" height="3.4" fill="#e03818" stroke="none" stroke-width="1" />
<rect x="575" y="558.4" width="1.3" height="3.4" fill="#e03818" stroke="none" stroke-width="1" />
<rect x="582" y="558.4" width="1.3" height="3.4" fill="#e03818" stroke="none" stroke-width="1" />
<rect x="589" y="558.4" width="1.3" height="3.4" fill="#e03818" stroke="none" stroke-width="1" />
<rect x="596" y="558.4" width="1.3" height="3.4" fill="#e03818" stroke="none" stroke-width="1" />
<rect x="603" y="558.4" width="1.3" height="3.4" fill="#e03818" stroke="none" stroke-width="1" />
<rect x="610" y="558.4" width="1.3" height="3.4" fill="#e03818" stroke="none" stroke-width="1" />
<rect x="617" y="558.4" width="1.3" height="3.4" fill="#e03818" stroke="none" stroke-width="1" />
<rect x="624" y="558.4" width="1.3" height="3.4" fill="#e03818" stroke="none" stroke-width="1" />
<rect x="509.6" y="541" width="1.2" height="1.8" fill="#e02818" stroke="none" stroke-width="1" />
<rect x="509.6" y="545" width="1.2" height="1.8" fill="#e02818" stroke="none" stroke-width="1" />
<rect x="509.6" y="549" width="1.2" height="1.8" fill="#e02818" stroke="none" stroke-width="1" />
<rect x="509.6" y="553" width="1.2" height="1.8" fill="#e02818" stroke="none" stroke-width="1" />
<rect x="509.6" y="557" width="1.2" height="1.8" fill="#e02818" stroke="none" stroke-width="1" />
<path d="M497.6 568 L497.6 526 Q498.20000000000005 520.4 502.40000000000003 520.2 Q506.6 520.4 507.20000000000005 526 L507.20000000000005 568" fill="none" stroke="#30d030" stroke-width="1" />
<line x1="501.0" y1="524" x2="501.0" y2="568" stroke="#30d030" stroke-width="0.9" />
<line x1="504.0" y1="524" x2="504.0" y2="568" stroke="#30d030" stroke-width="0.9" />
<circle cx="502.40000000000003" cy="534" r="1.2" fill="#50f050" stroke="none" stroke-width="0"/>
<path d="M604 568 L604 526 Q604.6 520.4 608.8 520.2 Q613 520.4 613.6 526 L613.6 568" fill="none" stroke="#30d030" stroke-width="1" />
<line x1="607.4" y1="524" x2="607.4" y2="568" stroke="#30d030" stroke-width="0.9" />
<line x1="610.4" y1="524" x2="610.4" y2="568" stroke="#30d030" stroke-width="0.9" />
<circle cx="608.8" cy="534" r="1.2" fill="#50f050" stroke="none" stroke-width="0"/>
<rect x="501" y="544" width="5" height="7" fill="#d87868" stroke="#f0a090" stroke-width="0.5" />
<rect x="605.7" y="544" width="4.7" height="7" fill="#d87868" stroke="#f0a090" stroke-width="0.5" />
<rect x="501" y="552.7" width="3.2" height="6.2" fill="#c86858" stroke="none" stroke-width="1" />
<rect x="606" y="552.7" width="3.2" height="6.2" fill="#c86858" stroke="none" stroke-width="1" />
<line x1="497" y1="532" x2="520" y2="532" stroke="#0a8ccc" stroke-width="0.7" />
<line x1="537.1" y1="500" x2="537.1" y2="551" stroke="#0a8ccc" stroke-width="0.8" />
<line x1="520" y1="551" x2="537.1" y2="551" stroke="#0a8ccc" stroke-width="0.7" />
<line x1="285.2" y1="540.6" x2="497" y2="540.6" stroke="#d8dca0" stroke-width="0.6" />
<rect x="448" y="540.2" width="3.7" height="8.3" fill="none" stroke="#d8e088" stroke-width="0.8" />
<rect x="492.4" y="540.2" width="3.6" height="6.3" fill="none" stroke="#d8e088" stroke-width="0.8" />
<rect x="287.2" y="539.8" width="3.4" height="7" fill="none" stroke="#d8e088" stroke-width="0.8" />
<line x1="434.3" y1="557.2" x2="487" y2="557.2" stroke="#0a8ccc" stroke-width="0.8" />
<line x1="434.3" y1="557.2" x2="434.3" y2="568" stroke="#0a8ccc" stroke-width="0.8" />
<line x1="472.6" y1="532" x2="472.6" y2="556" stroke="#0a8ccc" stroke-width="0.7" />
<line x1="296.8" y1="530" x2="296.8" y2="568" stroke="#0a8ccc" stroke-width="0.8" />
<line x1="327.6" y1="530" x2="327.6" y2="568" stroke="#0a8ccc" stroke-width="0.8" />
<line x1="429.3" y1="515" x2="429.3" y2="568" stroke="#0a8ccc" stroke-width="0.8" />
<line x1="487.6" y1="515" x2="487.6" y2="560" stroke="#0a8ccc" stroke-width="0.7" />
<line x1="426.8" y1="515.6" x2="426.8" y2="536" stroke="#0a8ccc" stroke-width="0.7" />
<rect x="451.6" y="514.4" width="2" height="2.4" fill="none" stroke="#a8c8e8" stroke-width="0.6" />
<rect x="486" y="514.4" width="2" height="2.4" fill="none" stroke="#a8c8e8" stroke-width="0.6" />
<rect x="616.2" y="539.6" width="15.4" height="6" fill="none" stroke="#e0e0e0" stroke-width="0.9" />
<rect x="636.2" y="539.6" width="23.6" height="6" fill="none" stroke="#e0e0e0" stroke-width="0.9" />
<line x1="648" y1="539.6" x2="648" y2="545.6" stroke="#e0e0e0" stroke-width="0.7" />
<line x1="636" y1="526.4" x2="660" y2="526.4" stroke="#d828d8" stroke-width="1" />
<line x1="636" y1="535.2" x2="660" y2="535.2" stroke="#d828d8" stroke-width="1" />
<line x1="636" y1="539.6" x2="660" y2="539.6" stroke="#d828d8" stroke-width="1" />
<line x1="624.4" y1="549.7" x2="632" y2="549.7" stroke="#d828d8" stroke-width="1.1" />
<rect x="622.8" y="548.9000000000001" width="1.6" height="1.6" fill="#f8f8f8" stroke="none" stroke-width="1" />
<line x1="624.4" y1="552.7" x2="632" y2="552.7" stroke="#d828d8" stroke-width="1.1" />
<rect x="622.8" y="551.9000000000001" width="1.6" height="1.6" fill="#f8f8f8" stroke="none" stroke-width="1" />
<line x1="624.4" y1="555.7" x2="632" y2="555.7" stroke="#d828d8" stroke-width="1.1" />
<rect x="622.8" y="554.9000000000001" width="1.6" height="1.6" fill="#f8f8f8" stroke="none" stroke-width="1" />
<line x1="613" y1="523.2" x2="662" y2="523.2" stroke="#0a8ccc" stroke-width="0.8" />
<line x1="613" y1="527.3" x2="662" y2="527.3" stroke="#0a8ccc" stroke-width="0.8" />
<line x1="613" y1="532" x2="662" y2="532" stroke="#0a8ccc" stroke-width="0.8" />
<circle cx="640.6" cy="527.6" r="1.6" fill="none" stroke="#e060a0" stroke-width="0.8"/>
<rect x="641.6" y="519.6" width="3.6" height="4" fill="none" stroke="#48c8a8" stroke-width="0.8" />
<line x1="624" y1="500" x2="624" y2="568" stroke="#0a8ccc" stroke-width="0.7" />
<line x1="646" y1="510" x2="646" y2="568" stroke="#0a8ccc" stroke-width="0.7" />
<rect x="273.3" y="532.7" width="11.6" height="4.3" fill="#1c9a1c" stroke="none" stroke-width="1" />
<path d="M273.3 537 L275.6 548.5 L280 548.5 L284.9 537" fill="none" stroke="#30d030" stroke-width="0.9" />
<line x1="274.8" y1="537" x2="274.8" y2="568" stroke="#30d030" stroke-width="1" />
<line x1="270.2" y1="548" x2="270.2" y2="568" stroke="#b8c890" stroke-width="0.7" />
<line x1="277" y1="538.4" x2="284.6" y2="546" stroke="#2a66d8" stroke-width="1.2" />
<line x1="284.6" y1="538.4" x2="277" y2="546" stroke="#2a66d8" stroke-width="1.2" />
<line x1="257.8" y1="532.7" x2="275" y2="532.7" stroke="#0a8ccc" stroke-width="0.8" />
<line x1="255.4" y1="537" x2="284" y2="537" stroke="#0a8ccc" stroke-width="0.9" />
<line x1="261.6" y1="548.5" x2="285" y2="548.5" stroke="#0a8ccc" stroke-width="0.9" />
<line x1="265" y1="557" x2="279" y2="557" stroke="#0a8ccc" stroke-width="0.8" />
<line x1="256.5" y1="536" x2="256.5" y2="568" stroke="#0a8ccc" stroke-width="0.8" />
<line x1="262.1" y1="528" x2="262.1" y2="552" stroke="#0a8ccc" stroke-width="0.8" />
<text x="259.6" y="545" font-size="3.6" fill="#e4e452" textLength="6" lengthAdjust="spacingAndGlyphs" font-weight="bold" transform="rotate(-90 259.6 545)">100</text>
<text x="254.4" y="562" font-size="3.6" fill="#e4e452" textLength="6.6" lengthAdjust="spacingAndGlyphs" font-weight="bold" transform="rotate(-90 254.4 562)">310</text>
<text x="260.6" y="566" font-size="3.6" fill="#e4e452" textLength="6" lengthAdjust="spacingAndGlyphs" font-weight="bold" transform="rotate(-90 260.6 566)">200</text>
<text x="268.6" y="556" font-size="3.6" fill="#e4e452" textLength="4" lengthAdjust="spacingAndGlyphs" font-weight="bold">45</text>
<text x="213.2" y="291" font-size="8.8" fill="#d0d038" textLength="6" lengthAdjust="spacingAndGlyphs" >C</text>
<line x1="208.3" y1="299.4" x2="234" y2="299.4" stroke="#c8c830" stroke-width="1.2" />
<text x="213.6" y="508.2" font-size="8.8" fill="#d0d038" textLength="5.6" lengthAdjust="spacingAndGlyphs" >D</text>
<line x1="208.3" y1="516.9" x2="233.4" y2="516.9" stroke="#c8c830" stroke-width="1.2" />
<text x="266.4" y="148.6" font-size="4.5" fill="#e4e452" textLength="6.6" lengthAdjust="spacingAndGlyphs" font-weight="bold">2525</text>
<text x="364" y="148.6" font-size="4.5" fill="#e4e452" textLength="7" lengthAdjust="spacingAndGlyphs" font-weight="bold">1580</text>
<text x="474" y="147.6" font-size="4.5" fill="#e4e452" textLength="6.8" lengthAdjust="spacingAndGlyphs" font-weight="bold">290</text>
<text x="632" y="147.6" font-size="4.5" fill="#e4e452" textLength="6.8" lengthAdjust="spacingAndGlyphs" font-weight="bold">290</text>
<text x="551" y="140.6" font-size="4.5" fill="#e4e452" textLength="8" lengthAdjust="spacingAndGlyphs" font-weight="bold">4935</text>
<text x="551.4" y="148.6" font-size="4.5" fill="#e4e452" textLength="7.6" lengthAdjust="spacingAndGlyphs" font-weight="bold">1080</text>
<text x="551.4" y="173.6" font-size="4.5" fill="#e4e452" textLength="7.6" lengthAdjust="spacingAndGlyphs" font-weight="bold">1120</text>
<text x="462" y="173.6" font-size="4.5" fill="#e4e452" textLength="6.6" lengthAdjust="spacingAndGlyphs" font-weight="bold">150</text>
<text x="477.4" y="173.6" font-size="4.5" fill="#e4e452" textLength="4.2" lengthAdjust="spacingAndGlyphs" font-weight="bold">90</text>
<text x="630.4" y="173.6" font-size="4.5" fill="#e4e452" textLength="4.2" lengthAdjust="spacingAndGlyphs" font-weight="bold">90</text>
<text x="644" y="173.6" font-size="4.5" fill="#e4e452" textLength="6.6" lengthAdjust="spacingAndGlyphs" font-weight="bold">150</text>
<text x="741" y="148.6" font-size="4.5" fill="#e4e452" textLength="7" lengthAdjust="spacingAndGlyphs" font-weight="bold">1580</text>
<text x="838.6" y="148.6" font-size="4.5" fill="#e4e452" textLength="6.6" lengthAdjust="spacingAndGlyphs" font-weight="bold">2525</text>
<text x="411" y="161.6" font-size="4.6" fill="#e4e452" textLength="2.4" lengthAdjust="spacingAndGlyphs" font-weight="bold">E</text>
<text x="506" y="165" font-size="3.6" fill="#e4e452" textLength="5" lengthAdjust="spacingAndGlyphs" font-weight="bold" transform="rotate(-90 506 165)">115</text>
<text x="699.0" y="161.6" font-size="4.6" fill="#e4e452" textLength="2.4" lengthAdjust="spacingAndGlyphs" font-weight="bold">E</text>
<text x="853.4" y="168" font-size="4" fill="#e4e452" textLength="6" lengthAdjust="spacingAndGlyphs" font-weight="bold" transform="rotate(-90 853.4 168)">145</text>
<text x="853.4" y="248" font-size="4" fill="#e4e452" textLength="8" lengthAdjust="spacingAndGlyphs" font-weight="bold" transform="rotate(-90 853.4 248)">1155</text>
<text x="853.4" y="320" font-size="4" fill="#e4e452" textLength="6" lengthAdjust="spacingAndGlyphs" font-weight="bold" transform="rotate(-90 853.4 320)">145</text>
<text x="860.4" y="376" font-size="4" fill="#e4e452" textLength="8" lengthAdjust="spacingAndGlyphs" font-weight="bold" transform="rotate(-90 860.4 376)">3420</text>
<text x="853.4" y="450" font-size="4" fill="#e4e452" textLength="8" lengthAdjust="spacingAndGlyphs" font-weight="bold" transform="rotate(-90 853.4 450)">2040</text>
<text x="494.4" y="259" font-size="4.5" fill="#e4e452" textLength="6.4" lengthAdjust="spacingAndGlyphs" font-weight="bold">940</text>
<text x="611.6" y="259" font-size="4.5" fill="#e4e452" textLength="6.4" lengthAdjust="spacingAndGlyphs" font-weight="bold">940</text>
<text x="569.6" y="338" font-size="4" fill="#e4e452" textLength="9" lengthAdjust="spacingAndGlyphs" font-weight="bold" transform="rotate(-90 569.6 338)">1930</text>
<text x="684.8" y="336" font-size="4" fill="#e4e452" textLength="9" lengthAdjust="spacingAndGlyphs" font-weight="bold" transform="rotate(-90 684.8 336)">1515</text>
<text x="676.6" y="276" font-size="3.6" fill="#e4e452" textLength="4" lengthAdjust="spacingAndGlyphs" font-weight="bold" transform="rotate(-90 676.6 276)">75</text>
<text x="463" y="356" font-size="4.5" fill="#e4e452" textLength="6.6" lengthAdjust="spacingAndGlyphs" font-weight="bold">570</text>
<text x="456.4" y="361" font-size="4.5" fill="#e4e452" textLength="6.6" lengthAdjust="spacingAndGlyphs" font-weight="bold">320</text>
<text x="642.4" y="356" font-size="4.5" fill="#e4e452" textLength="6.6" lengthAdjust="spacingAndGlyphs" font-weight="bold">570</text>
<text x="649.0" y="361" font-size="4.5" fill="#e4e452" textLength="6.6" lengthAdjust="spacingAndGlyphs" font-weight="bold">320</text>
<text x="378" y="340" font-size="4" fill="#e4e452" textLength="6.6" lengthAdjust="spacingAndGlyphs" font-weight="bold" transform="rotate(-90 378 340)">910</text>
<text x="291.6" y="390" font-size="4.5" fill="#e4e452" textLength="6.9" lengthAdjust="spacingAndGlyphs" font-weight="bold">125</text>
<text x="302" y="390" font-size="4.5" fill="#e4e452" textLength="4.6" lengthAdjust="spacingAndGlyphs" font-weight="bold">25</text>
<text x="329.4" y="390" font-size="4.5" fill="#e4e452" textLength="6.9" lengthAdjust="spacingAndGlyphs" font-weight="bold">490</text>
<text x="358.6" y="390" font-size="4.5" fill="#e4e452" textLength="4.6" lengthAdjust="spacingAndGlyphs" font-weight="bold">25</text>
<text x="365.8" y="390" font-size="4.5" fill="#e4e452" textLength="6.9" lengthAdjust="spacingAndGlyphs" font-weight="bold">100</text>
<text x="301" y="399" font-size="4.5" fill="#e4e452" textLength="6.6" lengthAdjust="spacingAndGlyphs" font-weight="bold">250</text>
<text x="325.6" y="399" font-size="4.5" fill="#e4e452" textLength="4.4" lengthAdjust="spacingAndGlyphs" font-weight="bold">99</text>
<text x="275.6" y="406.6" font-size="4.5" fill="#e4e452" textLength="6.6" lengthAdjust="spacingAndGlyphs" font-weight="bold">150</text>
<text x="267" y="406.6" font-size="4.5" fill="#e4e452" textLength="4.2" lengthAdjust="spacingAndGlyphs" font-weight="bold">30</text>
<text x="377.4" y="406.6" font-size="4.5" fill="#e4e452" textLength="8.6" lengthAdjust="spacingAndGlyphs" font-weight="bold">1520</text>
<text x="290" y="435" font-size="4.5" fill="#e4e452" textLength="9" lengthAdjust="spacingAndGlyphs" font-weight="bold">132.5</text>
<text x="322" y="435" font-size="4.5" fill="#e4e452" textLength="6.6" lengthAdjust="spacingAndGlyphs" font-weight="bold">380</text>
<text x="409.4" y="411.6" font-size="4.5" fill="#e4e452" textLength="6.6" lengthAdjust="spacingAndGlyphs" font-weight="bold">360</text>
<text x="451" y="411.6" font-size="4.5" fill="#e4e452" textLength="6.6" lengthAdjust="spacingAndGlyphs" font-weight="bold">352</text>
<text x="498.6" y="411.6" font-size="4.5" fill="#e4e452" textLength="6.6" lengthAdjust="spacingAndGlyphs" font-weight="bold">270</text>
<text x="532.6" y="411.6" font-size="4.5" fill="#e4e452" textLength="6.6" lengthAdjust="spacingAndGlyphs" font-weight="bold">360</text>
<text x="511.6" y="389.4" font-size="4.5" fill="#e4e452" textLength="6.6" lengthAdjust="spacingAndGlyphs" font-weight="bold">675</text>
<text x="595" y="389.4" font-size="4.5" fill="#e4e452" textLength="6.6" lengthAdjust="spacingAndGlyphs" font-weight="bold">675</text>
<text x="494" y="398" font-size="4.5" fill="#e4e452" textLength="6.6" lengthAdjust="spacingAndGlyphs" font-weight="bold">190</text>
<text x="481" y="398" font-size="4.5" fill="#e4e452" textLength="4.2" lengthAdjust="spacingAndGlyphs" font-weight="bold">60</text>
<text x="452" y="437.8" font-size="4.5" fill="#e4e452" textLength="6.6" lengthAdjust="spacingAndGlyphs" font-weight="bold">275</text>
<text x="470" y="455" font-size="4.5" fill="#e4e452" textLength="6.6" lengthAdjust="spacingAndGlyphs" font-weight="bold">190</text>
<text x="479" y="407" font-size="4.5" fill="#e4e452" textLength="4.2" lengthAdjust="spacingAndGlyphs" font-weight="bold">88</text>
<text x="478" y="438" font-size="4.5" fill="#e4e452" textLength="4.2" lengthAdjust="spacingAndGlyphs" font-weight="bold">80</text>
<text x="494" y="438" font-size="4.5" fill="#e4e452" textLength="5.4" lengthAdjust="spacingAndGlyphs" font-weight="bold">115</text>
<text x="506" y="438" font-size="4.5" fill="#e4e452" textLength="4.4" lengthAdjust="spacingAndGlyphs" font-weight="bold">85</text>
<text x="650" y="406" font-size="4.5" fill="#e4e452" textLength="9" lengthAdjust="spacingAndGlyphs" font-weight="bold">3030</text>
<text x="632" y="409.6" font-size="4.5" fill="#e4e452" textLength="10" lengthAdjust="spacingAndGlyphs" font-weight="bold">40 30</text>
<text x="556.6" y="452" font-size="4" fill="#e4e452" textLength="7" lengthAdjust="spacingAndGlyphs" font-weight="bold" transform="rotate(-90 556.6 452)">554</text>
<text x="646" y="427" font-size="4" fill="#e4e452" textLength="6.6" lengthAdjust="spacingAndGlyphs" font-weight="bold" transform="rotate(-90 646 427)">170</text>
<text x="646" y="461" font-size="4.5" fill="#e4e452" textLength="6.6" lengthAdjust="spacingAndGlyphs" font-weight="bold">230</text>
<text x="420" y="508.8" font-size="4.5" fill="#e4e452" textLength="6.6" lengthAdjust="spacingAndGlyphs" font-weight="bold">500</text>
<text x="466.6" y="508.8" font-size="4.5" fill="#e4e452" textLength="6.6" lengthAdjust="spacingAndGlyphs" font-weight="bold">850</text>
<text x="519.4" y="508.8" font-size="4.5" fill="#e4e452" textLength="6.6" lengthAdjust="spacingAndGlyphs" font-weight="bold">350</text>
<text x="446" y="492" font-size="4.5" fill="#e4e452" textLength="6.6" lengthAdjust="spacingAndGlyphs" font-weight="bold">300</text>
<text x="467" y="492" font-size="4.5" fill="#e4e452" textLength="15" lengthAdjust="spacingAndGlyphs" font-weight="bold">50 60 60</text>
<text x="491" y="492" font-size="4.5" fill="#e4e452" textLength="6.6" lengthAdjust="spacingAndGlyphs" font-weight="bold">170</text>
<text x="504" y="492" font-size="4.5" fill="#e4e452" textLength="10" lengthAdjust="spacingAndGlyphs" font-weight="bold">50 62</text>
<text x="326" y="508" font-size="4.5" fill="#e4e452" textLength="8.6" lengthAdjust="spacingAndGlyphs" font-weight="bold">1000</text>
<text x="363.8" y="470" font-size="4" fill="#e4e452" textLength="6.6" lengthAdjust="spacingAndGlyphs" font-weight="bold" transform="rotate(-90 363.8 470)">617</text>
<text x="388.4" y="452" font-size="4" fill="#e4e452" textLength="6.6" lengthAdjust="spacingAndGlyphs" font-weight="bold" transform="rotate(-90 388.4 452)">640</text>
<text x="378.2" y="534" font-size="4" fill="#e4e452" textLength="6.6" lengthAdjust="spacingAndGlyphs" font-weight="bold" transform="rotate(-90 378.2 534)">455</text>
<text x="363.4" y="549" font-size="4" fill="#e4e452" textLength="6.6" lengthAdjust="spacingAndGlyphs" font-weight="bold" transform="rotate(-90 363.4 549)">516</text>
<text x="326" y="561" font-size="4" fill="#e4e452" textLength="6.6" lengthAdjust="spacingAndGlyphs" font-weight="bold" transform="rotate(-90 326 561)">330</text>
<text x="295" y="548" font-size="3.6" fill="#e4e452" textLength="6" lengthAdjust="spacingAndGlyphs" font-weight="bold" transform="rotate(-90 295 548)">135</text>
<text x="295" y="566" font-size="3.6" fill="#e4e452" textLength="6" lengthAdjust="spacingAndGlyphs" font-weight="bold" transform="rotate(-90 295 566)">310</text>
<text x="268" y="506" font-size="3.6" fill="#e4e452" textLength="4" lengthAdjust="spacingAndGlyphs" font-weight="bold">80</text>
<text x="388" y="487.6" font-size="4.5" fill="#e4e452" textLength="4" lengthAdjust="spacingAndGlyphs" font-weight="bold">70</text>
<text x="394.6" y="481" font-size="4.6" fill="#e4e452" textLength="2.6" lengthAdjust="spacingAndGlyphs" font-weight="bold">B</text>
<text x="749" y="397.6" font-size="4.5" fill="#e4e452" textLength="4.2" lengthAdjust="spacingAndGlyphs" font-weight="bold">80</text>
<text x="778" y="397.6" font-size="4.5" fill="#e4e452" textLength="6.6" lengthAdjust="spacingAndGlyphs" font-weight="bold">640</text>
<text x="810" y="397.6" font-size="4.5" fill="#e4e452" textLength="4.2" lengthAdjust="spacingAndGlyphs" font-weight="bold">80</text>
<text x="817.6" y="397.6" font-size="4.5" fill="#e4e452" textLength="8.6" lengthAdjust="spacingAndGlyphs" font-weight="bold">4020</text>
<text x="830" y="407" font-size="4.5" fill="#e4e452" textLength="6.6" lengthAdjust="spacingAndGlyphs" font-weight="bold">150</text>
<text x="842.6" y="407" font-size="4.5" fill="#e4e452" textLength="4.2" lengthAdjust="spacingAndGlyphs" font-weight="bold">30</text>
<text x="779.8" y="431.6" font-size="4.5" fill="#e4e452" textLength="6.6" lengthAdjust="spacingAndGlyphs" font-weight="bold">716</text>
<text x="718.6" y="404" font-size="4" fill="#e4e452" textLength="6.6" lengthAdjust="spacingAndGlyphs" font-weight="bold" transform="rotate(-90 718.6 404)">230</text>
<text x="718.6" y="426" font-size="4" fill="#e4e452" textLength="6.6" lengthAdjust="spacingAndGlyphs" font-weight="bold" transform="rotate(-90 718.6 426)">120</text>
<text x="719" y="432.6" font-size="4.5" fill="#e4e452" textLength="6.6" lengthAdjust="spacingAndGlyphs" font-weight="bold">280</text>
<text x="761.4" y="514.6" font-size="4" fill="#e4e452" textLength="9" lengthAdjust="spacingAndGlyphs" font-weight="bold" transform="rotate(-90 761.4 514.6)">1495</text>
<text x="718.6" y="512" font-size="4" fill="#e4e452" textLength="8" lengthAdjust="spacingAndGlyphs" font-weight="bold" transform="rotate(-90 718.6 512)">+120</text>
<text x="506" y="519" font-size="3.6" fill="#e4e452" textLength="6" lengthAdjust="spacingAndGlyphs" font-weight="bold" transform="rotate(-90 506 519)">100</text>
<text x="516" y="484" font-size="3.6" fill="#e4e452" textLength="4" lengthAdjust="spacingAndGlyphs" font-weight="bold">30</text>
<text x="516" y="490" font-size="3.6" fill="#e4e452" textLength="4" lengthAdjust="spacingAndGlyphs" font-weight="bold">20</text>
<text x="427.6" y="472" font-size="4.5" fill="#e4e452" textLength="4" lengthAdjust="spacingAndGlyphs" font-weight="bold">55</text>
<text x="427.6" y="478" font-size="4.5" fill="#e4e452" textLength="4" lengthAdjust="spacingAndGlyphs" font-weight="bold">45</text>
<text x="553" y="526" font-size="3.8" fill="#e4e452" textLength="7.4" lengthAdjust="spacingAndGlyphs" font-weight="bold">1100</text>
<text x="424" y="561" font-size="4" fill="#e4e452" textLength="6.6" lengthAdjust="spacingAndGlyphs" font-weight="bold" transform="rotate(-90 424 561)">200</text>
<text x="412.6" y="544" font-size="4.5" fill="#e4e452" textLength="4" lengthAdjust="spacingAndGlyphs" font-weight="bold">75</text>
<text x="468" y="546" font-size="3.6" fill="#e4e452" textLength="4" lengthAdjust="spacingAndGlyphs" font-weight="bold" transform="rotate(-90 468 546)">70</text>
<text x="404" y="554" font-size="3.6" fill="#e4e452" textLength="4" lengthAdjust="spacingAndGlyphs" font-weight="bold" transform="rotate(-90 404 554)">85</text>
<text x="530.6" y="468" font-size="3.6" fill="#e4e452" textLength="6" lengthAdjust="spacingAndGlyphs" font-weight="bold" transform="rotate(-90 530.6 468)">100</text>
<text x="533.6" y="490" font-size="3.6" fill="#e4e452" textLength="6" lengthAdjust="spacingAndGlyphs" font-weight="bold" transform="rotate(-90 533.6 490)">125</text>
<text x="400.6" y="476" font-size="4" fill="#e4e452" textLength="6.6" lengthAdjust="spacingAndGlyphs" font-weight="bold" transform="rotate(-90 400.6 476)">240</text>
<text x="649" y="524" font-size="4.5" fill="#e4e452" textLength="4" lengthAdjust="spacingAndGlyphs" font-weight="bold">90</text>
<text x="652" y="546" font-size="3.6" fill="#e4e452" textLength="4" lengthAdjust="spacingAndGlyphs" font-weight="bold" transform="rotate(-90 652 546)">50</text>
<text x="641.6" y="519.6" font-size="3.4" fill="#e4e452" textLength="3.4" lengthAdjust="spacingAndGlyphs" font-weight="bold">15</text>
<text x="637" y="552" font-size="3.6" fill="#e4e452" textLength="6" lengthAdjust="spacingAndGlyphs" font-weight="bold" transform="rotate(-90 637 552)">105</text>
<text x="660" y="503" font-size="4" fill="#e4e452" textLength="6.6" lengthAdjust="spacingAndGlyphs" font-weight="bold" transform="rotate(-90 660 503)">650</text>
<text x="661" y="566" font-size="4" fill="#e4e452" textLength="6.6" lengthAdjust="spacingAndGlyphs" font-weight="bold" transform="rotate(-90 661 566)">150</text>
<text x="687" y="387" font-size="3.6" fill="#e4e452" textLength="7" lengthAdjust="spacingAndGlyphs" font-weight="bold" transform="rotate(-90 687 387)">1067</text>
<text x="453" y="272.6" font-size="3.8" fill="#e8e8e8" textLength="25.6" lengthAdjust="spacingAndGlyphs" >Kornett 1-4f. 8'</text>
<text x="633" y="272.6" font-size="3.8" fill="#e8e8e8" textLength="25.6" lengthAdjust="spacingAndGlyphs" >Kornett 1-4f. 8'</text>
<text x="548" y="400.4" font-size="4" fill="#e8e8e8" textLength="16.6" lengthAdjust="spacingAndGlyphs" >HW / PEG</text>
<text x="570" y="421" font-size="3.8" fill="#e8e8e8" textLength="32.6" lengthAdjust="spacingAndGlyphs" >Stößel (Verstrackung)</text>
<text x="765.6" y="472" font-size="4" fill="#e8e8e8" textLength="36.2" lengthAdjust="spacingAndGlyphs" >Setzer (800x600x210)</text>
<text x="765.6" y="478.4" font-size="4" fill="#e8e8e8" textLength="39" lengthAdjust="spacingAndGlyphs" >(inkl. Stromversorgung)</text>
<text x="340" y="565" font-size="3.8" fill="#e8e8e8" textLength="32" lengthAdjust="spacingAndGlyphs" >Burg HW / PEG zum</text>
<text x="279.4" y="262" font-size="3.6" fill="#e8e8e8" textLength="24" lengthAdjust="spacingAndGlyphs" font-weight="bold" transform="rotate(-90 279.4 262)">C Gambe 8'</text>
<text x="296.4" y="310" font-size="3.6" fill="#e8e8e8" textLength="12" lengthAdjust="spacingAndGlyphs" font-weight="bold" transform="rotate(-90 296.4 310)">Cis 8'</text>
<text x="370" y="312" font-size="3.6" fill="#e8e8e8" textLength="14" lengthAdjust="spacingAndGlyphs" font-weight="bold" transform="rotate(-90 370 312)">C 8 v 8'</text>
<text x="347.6" y="226" font-size="3.6" fill="#e8e8e8" textLength="22" lengthAdjust="spacingAndGlyphs" font-weight="bold" transform="rotate(-90 347.6 226)">C Flaut 8'</text>
<text x="361.6" y="230" font-size="3.6" fill="#e8e8e8" textLength="22" lengthAdjust="spacingAndGlyphs" font-weight="bold" transform="rotate(-90 361.6 230)">C Prinz 8'</text>
<text x="834.6" y="268" font-size="3.6" fill="#e8e8e8" textLength="26" lengthAdjust="spacingAndGlyphs" font-weight="bold" transform="rotate(-90 834.6 268)">Cs Gambe 8'</text>
<text x="766.4" y="226" font-size="3.6" fill="#e8e8e8" textLength="22" lengthAdjust="spacingAndGlyphs" font-weight="bold" transform="rotate(-90 766.4 226)">C Flaut 8'</text>
<text x="752.4" y="230" font-size="3.6" fill="#e8e8e8" textLength="22" lengthAdjust="spacingAndGlyphs" font-weight="bold" transform="rotate(-90 752.4 230)">C Prinz 8'</text>
</g>
<g>
<line x1="528.8" y1="408" x2="528.8" y2="514" stroke="#2a9ae0" stroke-width="0.7" />
<line x1="532.7" y1="408" x2="532.7" y2="514" stroke="#2a9ae0" stroke-width="0.7" />
<line x1="535.3" y1="408" x2="535.3" y2="514" stroke="#2a9ae0" stroke-width="0.7" />
<line x1="551.2" y1="408" x2="551.2" y2="514" stroke="#2a9ae0" stroke-width="0.7" />
<line x1="516" y1="417.6" x2="553" y2="417.6" stroke="#2a9ae0" stroke-width="0.7" />
<line x1="516" y1="480" x2="553" y2="480" stroke="#2a9ae0" stroke-width="0.7" />
<line x1="516" y1="456.8" x2="540" y2="456.8" stroke="#2a9ae0" stroke-width="0.7" />
<text x="527.6" y="466" font-size="3.8" fill="#e4e452" textLength="12" lengthAdjust="spacingAndGlyphs" font-weight="bold" transform="rotate(-90 527.6 466)">70 50</text>
<text x="535.6" y="492" font-size="3.8" fill="#e4e452" textLength="12" lengthAdjust="spacingAndGlyphs" font-weight="bold" transform="rotate(-90 535.6 492)">15 50</text>
<line x1="398" y1="408" x2="398" y2="514" stroke="#2a9ae0" stroke-width="0.6" />
<line x1="404" y1="408" x2="404" y2="514" stroke="#2a9ae0" stroke-width="0.6" />
</g>
</svg>
</body></html>
